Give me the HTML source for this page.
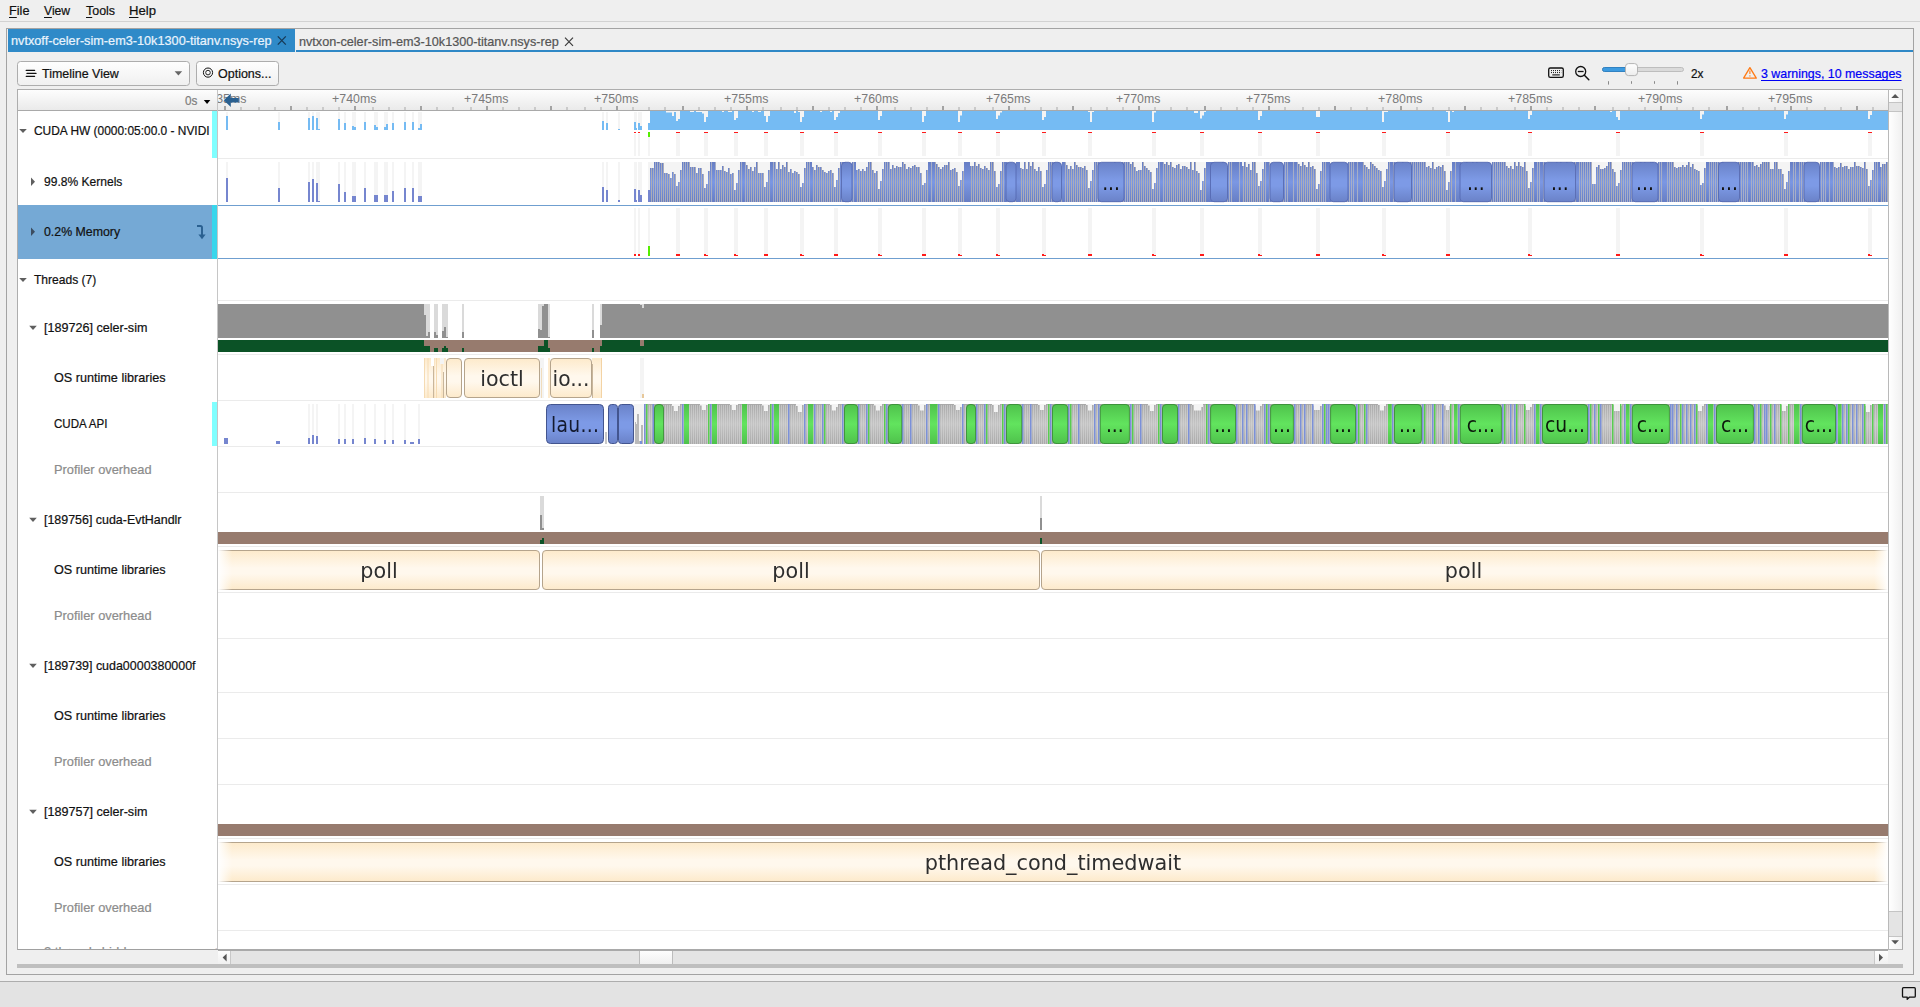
<!DOCTYPE html>
<html lang="en">
<head>
<meta charset="utf-8">
<title>NVIDIA Nsight Systems</title>
<style>
html,body{margin:0;padding:0}
body{width:1920px;height:1007px;overflow:hidden;background:#efefef;position:relative;
  font-family:"Liberation Sans",sans-serif;font-size:13px;color:#111;line-height:16px}
*{box-sizing:border-box}
.abs{position:absolute;white-space:pre}
#menubar{position:absolute;left:0;top:0;width:1920px;height:22px;border-bottom:1px solid #d2d2d2;background:#efefef}
#menubar u{text-decoration:underline;text-underline-offset:1.5px;text-decoration-thickness:1px}
#frame{position:absolute;left:6px;top:28px;width:1908px;height:947px;border:1px solid #a3a3a3;background:#efefef}
#tab1{position:absolute;left:8px;top:29px;width:287px;height:23px;background:#2f8ac8;color:#eaf4fd}
#tab2{position:absolute;left:296px;top:29px;width:290px;height:21px;color:#555}
.tabtxt{position:absolute;white-space:pre}
#toolbar{position:absolute;left:7px;top:52px;width:1906px;height:37px}
#tabline{position:absolute;left:296px;top:50px;width:1617px;height:2px;background:#2f88c6}
.btn{position:absolute;top:9px;height:25px;border:1px solid #adadad;border-radius:3.5px;
  background:linear-gradient(#fefefe,#f0f0f0)}
#tree{position:absolute;left:17px;top:89px;width:201px;height:861px;background:#fff;border-left:1px solid #adadad;border-top:1px solid #adadad;border-bottom:1px solid #a0a0a0;overflow:hidden}
#tl{position:absolute;left:218px;top:89px;width:1670px;height:862px;background:#fff;border-top:1px solid #adadad;border-bottom:2px solid #a9a9a9}
#divider{position:absolute;left:217px;top:90px;width:1px;height:859px;background:#c6c6c6}
.hdr{position:absolute;top:90px;height:20px;background:linear-gradient(#fdfdfd,#eaeaea)}
.hdrline{position:absolute;top:110px;height:1px;background:#a9a9a9}
.t{position:absolute;white-space:pre;height:16px;line-height:16px;letter-spacing:0;transform-origin:0 0;-webkit-text-stroke:0.22px currentColor}
.t u{text-decoration-skip-ink:none;text-decoration:underline;text-underline-offset:1.5px;text-decoration-thickness:1px}
.g{color:#8c8c8c}
.row{position:absolute;left:0;width:199px}
.row.sel{background:#75a9d5}
.cy{position:absolute;left:194px;width:5px;background:#80ffff}
#vsb{position:absolute;left:1888px;top:89px;width:15px;height:861px;border-left:1px solid #b9b9b9;border-right:1px solid #aaa;border-top:1px solid #adadad;border-bottom:1px solid #b4b4b4;background:#e4e4e4}
#vsb i{position:absolute;left:0;width:13px;display:block}
#hsb{position:absolute;left:218px;top:951px;width:1670px;height:13px;background:#e4e4e4}
#hsb i{position:absolute;top:0;height:13px;display:block}
#split{position:absolute;left:17px;top:964px;width:1886px;height:4px;background:#bfbfbf}
#status{position:absolute;left:0;top:981px;width:1920px;height:26px;background:#e3e3e3;border-top:1px solid #adadad}
svg{position:absolute;left:0;top:0;overflow:hidden}
.tl{font-family:"DejaVu Sans",sans-serif;font-size:20.8px;letter-spacing:0}
.tc{font-family:"DejaVu Sans Condensed","DejaVu Sans",sans-serif;font-stretch:condensed;font-size:20.8px;letter-spacing:0}
.rl{font-family:"Liberation Sans",sans-serif;font-size:13px;fill:#7a7a7a}
a{color:#0000f5;text-decoration:underline;text-underline-offset:2.2px;text-decoration-thickness:1px;text-decoration-skip-ink:none}
</style>
</head>
<body>
<div id="menubar">
<div class="t" style="left:9.02px;top:3.00px;color:#111;transform:scaleX(0.9788)"><u>F</u>ile</div>
<div class="t" style="left:44.30px;top:3.00px;color:#111;transform:scaleX(0.9351)"><u>V</u>iew</div>
<div class="t" style="left:86.00px;top:3.00px;color:#111;transform:scaleX(0.9563)"><u>T</u>ools</div>
<div class="t" style="left:129.29px;top:3.00px;color:#111;transform:scaleX(1.0076)"><u>H</u>elp</div>
</div>
<div id="frame"></div>
<div id="tab1"><div class="t" style="left:3.20px;top:3.50px;color:#eaf4fd;transform:scaleX(0.9763)">nvtxoff-celer-sim-em3-10k1300-titanv.nsys-rep</div></div>
<div id="tab2"><div class="t" style="left:2.60px;top:5.00px;color:#555;transform:scaleX(0.9725)">nvtxon-celer-sim-em3-10k1300-titanv.nsys-rep</div></div>
<div id="tabline"></div>
<div id="toolbar">
<div class="btn" style="left:10px;width:173px"><div class="t" style="left:24.00px;top:4.00px;color:#111;transform:scaleX(0.9578)">Timeline View</div></div>
<div class="btn" style="left:189px;width:83px"><div class="t" style="left:21.40px;top:4.00px;color:#111;transform:scaleX(0.9614)">Options...</div></div>
<div class="t" style="left:1684.10px;top:13.80px;color:#111;transform:scaleX(0.9065)">2x</div>
<div class="t" style="left:1754.30px;top:14.00px;color:#0000f5;transform:scaleX(0.9533)"><a>3 warnings, 10 messages</a></div>
</div>
<div id="tl"></div>
<div class="hdr" style="left:218px;width:1670px"></div>
<div id="tree">
<div class="hdr" style="left:0;top:0;width:199px"><div class="t" style="left:167.00px;top:2.70px;color:#7d7d7d;transform:scaleX(0.8995)">0s</div></div>
<div class="row" style="top:21px;height:47px"><div class="t" style="left:16.30px;top:11.50px;color:#111;transform:scaleX(0.9172)">CUDA HW (0000:05:00.0 - NVIDI</div><i class="cy" style="top:0px;height:47px;background:#80ffff"></i></div>
<div class="row" style="top:69px;height:46px"><div class="t" style="left:26.20px;top:14.50px;color:#111;transform:scaleX(0.9265)">99.8% Kernels</div></div>
<div class="row sel" style="top:115px;height:54px"><div class="t" style="left:26.20px;top:18.50px;color:#111;transform:scaleX(0.9493)">0.2% Memory</div><i class="cy" style="top:0px;height:54px;background:#39d6ec"></i></div>
<div class="row" style="top:169px;height:41px"><div class="t" style="left:16.30px;top:12.50px;color:#111;transform:scaleX(0.9273)">Threads (7)</div></div>
<div class="row" style="top:211px;height:53px"><div class="t" style="left:26.20px;top:18.50px;color:#111;transform:scaleX(0.9669)">[189726] celer-sim</div></div>
<div class="row" style="top:265px;height:45px"><div class="t" style="left:36.20px;top:14.50px;color:#111;transform:scaleX(0.9717)">OS runtime libraries</div></div>
<div class="row" style="top:311px;height:45px"><div class="t" style="left:36.20px;top:14.50px;color:#111;transform:scaleX(0.8900)">CUDA API</div><i class="cy" style="top:1px;height:44px;background:#80ffff"></i></div>
<div class="row" style="top:357px;height:45px"><div class="t" style="left:35.61px;top:14.50px;color:#8c8c8c;transform:scaleX(0.9860)">Profiler overhead</div></div>
<div class="row" style="top:403px;height:53px"><div class="t" style="left:26.20px;top:18.50px;color:#111;transform:scaleX(0.9558)">[189756] cuda-EvtHandlr</div></div>
<div class="row" style="top:457px;height:45px"><div class="t" style="left:36.20px;top:14.50px;color:#111;transform:scaleX(0.9717)">OS runtime libraries</div></div>
<div class="row" style="top:503px;height:45px"><div class="t" style="left:35.61px;top:14.50px;color:#8c8c8c;transform:scaleX(0.9860)">Profiler overhead</div></div>
<div class="row" style="top:549px;height:53px"><div class="t" style="left:26.20px;top:18.50px;color:#111;transform:scaleX(0.9571)">[189739] cuda0000380000f</div></div>
<div class="row" style="top:603px;height:45px"><div class="t" style="left:36.20px;top:14.50px;color:#111;transform:scaleX(0.9717)">OS runtime libraries</div></div>
<div class="row" style="top:649px;height:45px"><div class="t" style="left:35.61px;top:14.50px;color:#8c8c8c;transform:scaleX(0.9860)">Profiler overhead</div></div>
<div class="row" style="top:695px;height:53px"><div class="t" style="left:26.20px;top:18.50px;color:#111;transform:scaleX(0.9669)">[189757] celer-sim</div></div>
<div class="row" style="top:749px;height:45px"><div class="t" style="left:36.20px;top:14.50px;color:#111;transform:scaleX(0.9717)">OS runtime libraries</div></div>
<div class="row" style="top:795px;height:45px"><div class="t" style="left:35.61px;top:14.50px;color:#8c8c8c;transform:scaleX(0.9860)">Profiler overhead</div></div>
<div class="row" style="top:841px;height:19px"><div class="t" style="left:26px;top:12.5px;color:#8c8c8c">2 threads hidden...</div><div class="t" style="left:178px;top:12.5px;color:#8c8c8c">&#8212; +</div></div>
</div>
<div class="hdrline" style="left:18px;width:1870px"></div>
<div id="divider"></div>
<div id="vsb">
  <i style="top:0;height:13px;background:linear-gradient(90deg,#fff,#f2f2f2);border-bottom:1px solid #c4c4c4"></i>
  <i style="top:21px;height:801px;background:linear-gradient(90deg,#fff,#f0f0f0);border-top:1px solid #c4c4c4;border-bottom:1px solid #c4c4c4"></i>
  <i style="top:846px;height:13px;background:linear-gradient(90deg,#fff,#f2f2f2);border-top:1px solid #c4c4c4"></i>
</div>
<div id="hsb">
  <i style="left:0;width:13px;background:linear-gradient(#fdfdfd,#f0f0f0);border-right:1px solid #c8c8c8"></i>
  <i style="left:421px;width:34px;background:linear-gradient(#fdfdfd,#f0f0f0);border-left:1px solid #bcbcbc;border-right:1px solid #bcbcbc"></i>
  <i style="left:1656px;width:14px;background:linear-gradient(#fdfdfd,#f0f0f0);border-left:1px solid #c8c8c8"></i>
</div>
<div id="split"></div>
<div id="status"></div>

<svg width="1920" height="1007" viewBox="0 0 1920 1007">
<defs>
  <linearGradient id="gk" x1="0" y1="162" x2="0" y2="202" gradientUnits="userSpaceOnUse">
    <stop offset="0" stop-color="#677ec4"/><stop offset="0.5" stop-color="#7b97e3"/><stop offset="1" stop-color="#677ec4"/>
  </linearGradient>
  <linearGradient id="gkb" x1="0" y1="0" x2="0" y2="1">
    <stop offset="0" stop-color="#6a82c8"/><stop offset="0.45" stop-color="#7d9ae6"/><stop offset="0.6" stop-color="#7d9ae6"/><stop offset="1" stop-color="#6a82c8"/>
  </linearGradient>
  <linearGradient id="gp" x1="0" y1="0" x2="0" y2="1">
    <stop offset="0" stop-color="#fdeacb"/><stop offset="0.45" stop-color="#fff8ed"/><stop offset="0.6" stop-color="#fff8ed"/><stop offset="1" stop-color="#fdeacb"/>
  </linearGradient>
  <linearGradient id="gg" x1="0" y1="404" x2="0" y2="444" gradientUnits="userSpaceOnUse">
    <stop offset="0" stop-color="#a9a9a9"/><stop offset="0.5" stop-color="#c4c4c4"/><stop offset="1" stop-color="#a9a9a9"/>
  </linearGradient>
  <linearGradient id="ggr" x1="0" y1="0" x2="0" y2="1">
    <stop offset="0" stop-color="#4fc24c"/><stop offset="0.5" stop-color="#62e45e"/><stop offset="1" stop-color="#4fc24c"/>
  </linearGradient>
  <linearGradient id="fl" x1="0" y1="0" x2="1" y2="0">
    <stop offset="0" stop-color="#fff" stop-opacity="1"/><stop offset="1" stop-color="#fff" stop-opacity="0"/>
  </linearGradient>
  <linearGradient id="fr" x1="0" y1="0" x2="1" y2="0">
    <stop offset="0" stop-color="#fff" stop-opacity="0"/><stop offset="1" stop-color="#fff" stop-opacity="1"/>
  </linearGradient>
  <linearGradient id="gh" x1="0" y1="0" x2="0" y2="1">
    <stop offset="0" stop-color="#ffffff"/><stop offset="1" stop-color="#ededed"/>
  </linearGradient>
  <clipPath id="cliptl"><rect x="218" y="90" width="1670" height="859"/></clipPath>
</defs>
<g clip-path="url(#cliptl)">
<path d="M240,107h2v3h-2zM258,107h2v3h-2zM274,107h2v3h-2zM306,107h2v3h-2zM322,107h2v3h-2zM338,107h2v3h-2zM372,107h2v3h-2zM388,107h2v3h-2zM404,107h2v3h-2zM436,107h2v3h-2zM452,107h2v3h-2zM470,107h2v3h-2zM502,107h2v3h-2zM518,107h2v3h-2zM534,107h2v3h-2zM566,107h2v3h-2zM584,107h2v3h-2zM600,107h2v3h-2zM632,107h2v3h-2zM648,107h2v3h-2zM664,107h2v3h-2zM698,107h2v3h-2zM714,107h2v3h-2zM730,107h2v3h-2zM762,107h2v3h-2zM780,107h2v3h-2zM796,107h2v3h-2zM828,107h2v3h-2zM844,107h2v3h-2zM860,107h2v3h-2zM894,107h2v3h-2zM910,107h2v3h-2zM926,107h2v3h-2zM958,107h2v3h-2zM974,107h2v3h-2zM992,107h2v3h-2zM1024,107h2v3h-2zM1040,107h2v3h-2zM1056,107h2v3h-2zM1090,107h2v3h-2zM1106,107h2v3h-2zM1122,107h2v3h-2zM1154,107h2v3h-2zM1170,107h2v3h-2zM1186,107h2v3h-2zM1220,107h2v3h-2zM1236,107h2v3h-2zM1252,107h2v3h-2zM1284,107h2v3h-2zM1302,107h2v3h-2zM1318,107h2v3h-2zM1350,107h2v3h-2zM1366,107h2v3h-2zM1382,107h2v3h-2zM1416,107h2v3h-2zM1432,107h2v3h-2zM1448,107h2v3h-2zM1480,107h2v3h-2zM1496,107h2v3h-2zM1514,107h2v3h-2zM1546,107h2v3h-2zM1562,107h2v3h-2zM1578,107h2v3h-2zM1612,107h2v3h-2zM1628,107h2v3h-2zM1644,107h2v3h-2zM1676,107h2v3h-2zM1692,107h2v3h-2zM1708,107h2v3h-2zM1742,107h2v3h-2zM1758,107h2v3h-2zM1774,107h2v3h-2zM1806,107h2v3h-2zM1824,107h2v3h-2zM1840,107h2v3h-2zM1872,107h2v3h-2z" fill="#cacaca"/>
<path d="M224,106h2v4h-2zM290,106h2v4h-2zM354,106h2v4h-2zM420,106h2v4h-2zM486,106h2v4h-2zM550,106h2v4h-2zM616,106h2v4h-2zM682,106h2v4h-2zM746,106h2v4h-2zM812,106h2v4h-2zM876,106h2v4h-2zM942,106h2v4h-2zM1008,106h2v4h-2zM1072,106h2v4h-2zM1138,106h2v4h-2zM1204,106h2v4h-2zM1268,106h2v4h-2zM1334,106h2v4h-2zM1400,106h2v4h-2zM1464,106h2v4h-2zM1530,106h2v4h-2zM1594,106h2v4h-2zM1660,106h2v4h-2zM1726,106h2v4h-2zM1790,106h2v4h-2zM1856,106h2v4h-2z" fill="#a3a3a3"/>
<text x="224.25" y="102.5" class="rl" text-anchor="middle" textLength="44.3" lengthAdjust="spacingAndGlyphs">+735ms</text>
<text x="354.25" y="102.5" class="rl" text-anchor="middle" textLength="44.3" lengthAdjust="spacingAndGlyphs">+740ms</text>
<text x="486.25" y="102.5" class="rl" text-anchor="middle" textLength="44.3" lengthAdjust="spacingAndGlyphs">+745ms</text>
<text x="616.25" y="102.5" class="rl" text-anchor="middle" textLength="44.3" lengthAdjust="spacingAndGlyphs">+750ms</text>
<text x="746.25" y="102.5" class="rl" text-anchor="middle" textLength="44.3" lengthAdjust="spacingAndGlyphs">+755ms</text>
<text x="876.25" y="102.5" class="rl" text-anchor="middle" textLength="44.3" lengthAdjust="spacingAndGlyphs">+760ms</text>
<text x="1008.25" y="102.5" class="rl" text-anchor="middle" textLength="44.3" lengthAdjust="spacingAndGlyphs">+765ms</text>
<text x="1138.25" y="102.5" class="rl" text-anchor="middle" textLength="44.3" lengthAdjust="spacingAndGlyphs">+770ms</text>
<text x="1268.25" y="102.5" class="rl" text-anchor="middle" textLength="44.3" lengthAdjust="spacingAndGlyphs">+775ms</text>
<text x="1400.25" y="102.5" class="rl" text-anchor="middle" textLength="44.3" lengthAdjust="spacingAndGlyphs">+780ms</text>
<text x="1530.25" y="102.5" class="rl" text-anchor="middle" textLength="44.3" lengthAdjust="spacingAndGlyphs">+785ms</text>
<text x="1660.25" y="102.5" class="rl" text-anchor="middle" textLength="44.3" lengthAdjust="spacingAndGlyphs">+790ms</text>
<text x="1790.25" y="102.5" class="rl" text-anchor="middle" textLength="44.3" lengthAdjust="spacingAndGlyphs">+795ms</text>
<rect x="218" y="158" width="1670" height="1" fill="#ebebeb"/>
<rect x="218" y="300" width="1670" height="1" fill="#ebebeb"/>
<rect x="218" y="354" width="1670" height="1" fill="#ebebeb"/>
<rect x="218" y="400" width="1670" height="1" fill="#ebebeb"/>
<rect x="218" y="446" width="1670" height="1" fill="#ebebeb"/>
<rect x="218" y="492" width="1670" height="1" fill="#ebebeb"/>
<rect x="218" y="546" width="1670" height="1" fill="#ebebeb"/>
<rect x="218" y="592" width="1670" height="1" fill="#ebebeb"/>
<rect x="218" y="638" width="1670" height="1" fill="#ebebeb"/>
<rect x="218" y="692" width="1670" height="1" fill="#ebebeb"/>
<rect x="218" y="738" width="1670" height="1" fill="#ebebeb"/>
<rect x="218" y="784" width="1670" height="1" fill="#ebebeb"/>
<rect x="218" y="838" width="1670" height="1" fill="#ebebeb"/>
<rect x="218" y="884" width="1670" height="1" fill="#ebebeb"/>
<rect x="218" y="930" width="1670" height="1" fill="#ebebeb"/>
<rect x="218" y="205" width="1670" height="1" fill="#6f9fd0"/>
<rect x="218" y="258" width="1670" height="1" fill="#6f9fd0"/>
<g id="hw">
<rect x="226" y="112" width="2" height="4" fill="#f4f4f4"/>
<rect x="278" y="112" width="2" height="10" fill="#f4f4f4"/>
<rect x="308" y="112" width="2" height="6" fill="#f4f4f4"/>
<rect x="312" y="112" width="2" height="4" fill="#f4f4f4"/>
<rect x="316" y="112" width="2" height="6" fill="#f4f4f4"/>
<rect x="318" y="112" width="2" height="17" fill="#f4f4f4"/>
<rect x="338" y="112" width="2" height="7" fill="#f4f4f4"/>
<rect x="344" y="112" width="2" height="11" fill="#f4f4f4"/>
<rect x="352" y="112" width="2" height="14" fill="#f4f4f4"/>
<rect x="354" y="112" width="2" height="15" fill="#f4f4f4"/>
<rect x="364" y="112" width="2" height="10" fill="#f4f4f4"/>
<rect x="374" y="112" width="2" height="13" fill="#f4f4f4"/>
<rect x="376" y="112" width="2" height="15" fill="#f4f4f4"/>
<rect x="384" y="112" width="2" height="15" fill="#f4f4f4"/>
<rect x="386" y="112" width="2" height="12" fill="#f4f4f4"/>
<rect x="392" y="112" width="2" height="11" fill="#f4f4f4"/>
<rect x="404" y="112" width="2" height="10" fill="#f4f4f4"/>
<rect x="412" y="112" width="2" height="10" fill="#f4f4f4"/>
<rect x="418" y="112" width="2" height="16" fill="#f4f4f4"/>
<rect x="420" y="112" width="2" height="12" fill="#f4f4f4"/>
<rect x="602" y="112" width="2" height="9" fill="#f4f4f4"/>
<rect x="606" y="112" width="2" height="11" fill="#f4f4f4"/>
<rect x="618" y="112" width="2" height="17" fill="#f4f4f4"/>
<rect x="634" y="112" width="2" height="10" fill="#f4f4f4"/>
<rect x="636" y="112" width="1" height="16" fill="#f4f4f4"/>
<rect x="638" y="112" width="2" height="11" fill="#f4f4f4"/>
<rect x="640" y="112" width="2" height="14" fill="#f4f4f4"/>
<rect x="226" y="116" width="2" height="14" fill="#75bbf3"/>
<rect x="278" y="122" width="2" height="8" fill="#75bbf3"/>
<rect x="308" y="118" width="2" height="12" fill="#75bbf3"/>
<rect x="312" y="116" width="2" height="14" fill="#75bbf3"/>
<rect x="316" y="118" width="2" height="12" fill="#75bbf3"/>
<rect x="318" y="129" width="2" height="1" fill="#75bbf3"/>
<rect x="338" y="119" width="2" height="11" fill="#75bbf3"/>
<rect x="344" y="123" width="2" height="7" fill="#75bbf3"/>
<rect x="352" y="126" width="2" height="4" fill="#75bbf3"/>
<rect x="354" y="127" width="2" height="3" fill="#75bbf3"/>
<rect x="364" y="122" width="2" height="8" fill="#75bbf3"/>
<rect x="374" y="125" width="2" height="5" fill="#75bbf3"/>
<rect x="376" y="127" width="2" height="3" fill="#75bbf3"/>
<rect x="384" y="127" width="2" height="3" fill="#75bbf3"/>
<rect x="386" y="124" width="2" height="6" fill="#75bbf3"/>
<rect x="392" y="123" width="2" height="7" fill="#75bbf3"/>
<rect x="404" y="122" width="2" height="8" fill="#75bbf3"/>
<rect x="412" y="122" width="2" height="8" fill="#75bbf3"/>
<rect x="418" y="128" width="2" height="2" fill="#75bbf3"/>
<rect x="420" y="124" width="2" height="6" fill="#75bbf3"/>
<rect x="602" y="121" width="2" height="9" fill="#75bbf3"/>
<rect x="606" y="123" width="2" height="7" fill="#75bbf3"/>
<rect x="618" y="129" width="2" height="1" fill="#75bbf3"/>
<rect x="634" y="122" width="2" height="8" fill="#75bbf3"/>
<rect x="636" y="128" width="1" height="2" fill="#75bbf3"/>
<rect x="638" y="123" width="2" height="7" fill="#75bbf3"/>
<rect x="640" y="126" width="2" height="4" fill="#75bbf3"/>
<rect x="648" y="123" width="2" height="7" fill="#75bbf3"/>
<rect x="650" y="111" width="1238" height="19" fill="#75bbf3"/>
<rect x="666" y="111" width="6" height="1.5" fill="#f4f4f4"/>
<rect x="672" y="111" width="2" height="5" fill="#f4f4f4"/>
<rect x="674" y="111" width="2" height="1" fill="#f4f4f4"/>
<rect x="676" y="111" width="2" height="10" fill="#f4f4f4"/>
<rect x="678" y="111" width="2" height="8" fill="#f4f4f4"/>
<rect x="690" y="111" width="4" height="1" fill="#f4f4f4"/>
<rect x="696" y="111" width="6" height="1" fill="#f4f4f4"/>
<rect x="702" y="111" width="2" height="2.5" fill="#f4f4f4"/>
<rect x="704" y="111" width="2" height="11" fill="#f4f4f4"/>
<rect x="706" y="111" width="2" height="6" fill="#f4f4f4"/>
<rect x="722" y="111" width="2" height="1" fill="#f4f4f4"/>
<rect x="728" y="111" width="4" height="1" fill="#f4f4f4"/>
<rect x="734" y="111" width="2" height="9" fill="#f4f4f4"/>
<rect x="736" y="111" width="2" height="7" fill="#f4f4f4"/>
<rect x="752" y="111" width="2" height="1" fill="#f4f4f4"/>
<rect x="758" y="111" width="3" height="1" fill="#f4f4f4"/>
<rect x="764" y="111" width="2" height="5" fill="#f4f4f4"/>
<rect x="766" y="111" width="2" height="11" fill="#f4f4f4"/>
<rect x="768" y="111" width="2" height="5" fill="#f4f4f4"/>
<rect x="794" y="111" width="2" height="2" fill="#f4f4f4"/>
<rect x="798" y="111" width="2" height="1" fill="#f4f4f4"/>
<rect x="800" y="111" width="2" height="11" fill="#f4f4f4"/>
<rect x="802" y="111" width="2" height="6" fill="#f4f4f4"/>
<rect x="820" y="111" width="2" height="1" fill="#f4f4f4"/>
<rect x="830" y="111" width="2" height="1" fill="#f4f4f4"/>
<rect x="834" y="111" width="2" height="9" fill="#f4f4f4"/>
<rect x="836" y="111" width="2" height="6" fill="#f4f4f4"/>
<rect x="838" y="111" width="2" height="2" fill="#f4f4f4"/>
<rect x="878" y="111" width="2" height="9" fill="#f4f4f4"/>
<rect x="880" y="111" width="2" height="5" fill="#f4f4f4"/>
<rect x="922" y="111" width="2" height="11" fill="#f4f4f4"/>
<rect x="924" y="111" width="2" height="5" fill="#f4f4f4"/>
<rect x="958" y="111" width="2" height="11" fill="#f4f4f4"/>
<rect x="960" y="111" width="2" height="4.5" fill="#f4f4f4"/>
<rect x="996" y="111" width="2" height="8" fill="#f4f4f4"/>
<rect x="998" y="111" width="2" height="4.5" fill="#f4f4f4"/>
<rect x="1000" y="111" width="2" height="1.5" fill="#f4f4f4"/>
<rect x="1042" y="111" width="2" height="9" fill="#f4f4f4"/>
<rect x="1044" y="111" width="2" height="6" fill="#f4f4f4"/>
<rect x="1088" y="111" width="6" height="1" fill="#f4f4f4"/>
<rect x="1090" y="111" width="2" height="11" fill="#f4f4f4"/>
<rect x="1152" y="111" width="2" height="11" fill="#f4f4f4"/>
<rect x="1154" y="111" width="2" height="1.5" fill="#f4f4f4"/>
<rect x="1194" y="111" width="4" height="2" fill="#f4f4f4"/>
<rect x="1200" y="111" width="2" height="7.5" fill="#f4f4f4"/>
<rect x="1202" y="111" width="2" height="4.5" fill="#f4f4f4"/>
<rect x="1204" y="111" width="2" height="1" fill="#f4f4f4"/>
<rect x="1258" y="111" width="2" height="9" fill="#f4f4f4"/>
<rect x="1260" y="111" width="2" height="5" fill="#f4f4f4"/>
<rect x="1316" y="111" width="4" height="6" fill="#f4f4f4"/>
<rect x="1382" y="111" width="2" height="11" fill="#f4f4f4"/>
<rect x="1384" y="111" width="4" height="1" fill="#f4f4f4"/>
<rect x="1446" y="111" width="2" height="1" fill="#f4f4f4"/>
<rect x="1448" y="111" width="2" height="11" fill="#f4f4f4"/>
<rect x="1452" y="111" width="2" height="1" fill="#f4f4f4"/>
<rect x="1528" y="111" width="2" height="8" fill="#f4f4f4"/>
<rect x="1530" y="111" width="2" height="4" fill="#f4f4f4"/>
<rect x="1610" y="111" width="2" height="1" fill="#f4f4f4"/>
<rect x="1616" y="111" width="2" height="6" fill="#f4f4f4"/>
<rect x="1618" y="111" width="2" height="9" fill="#f4f4f4"/>
<rect x="1700" y="111" width="2" height="8" fill="#f4f4f4"/>
<rect x="1702" y="111" width="2" height="3.5" fill="#f4f4f4"/>
<rect x="1784" y="111" width="2" height="8" fill="#f4f4f4"/>
<rect x="1786" y="111" width="2" height="3.5" fill="#f4f4f4"/>
<rect x="1868" y="111" width="2" height="8" fill="#f4f4f4"/>
<rect x="1870" y="111" width="2" height="4" fill="#f4f4f4"/>
<rect x="676" y="132" width="4" height="1" fill="#ff1a1a"/>
<rect x="676" y="133" width="4" height="23" fill="#f4f4f4"/>
<rect x="704" y="132" width="4" height="1" fill="#ff1a1a"/>
<rect x="704" y="133" width="4" height="23" fill="#f4f4f4"/>
<rect x="734" y="132" width="4" height="1" fill="#ff1a1a"/>
<rect x="734" y="133" width="4" height="23" fill="#f4f4f4"/>
<rect x="764" y="132" width="4" height="1" fill="#ff1a1a"/>
<rect x="764" y="133" width="4" height="23" fill="#f4f4f4"/>
<rect x="800" y="132" width="4" height="1" fill="#ff1a1a"/>
<rect x="800" y="133" width="4" height="23" fill="#f4f4f4"/>
<rect x="834" y="132" width="4" height="1" fill="#ff1a1a"/>
<rect x="834" y="133" width="4" height="23" fill="#f4f4f4"/>
<rect x="878" y="132" width="4" height="1" fill="#ff1a1a"/>
<rect x="878" y="133" width="4" height="23" fill="#f4f4f4"/>
<rect x="922" y="132" width="4" height="1" fill="#ff1a1a"/>
<rect x="922" y="133" width="4" height="23" fill="#f4f4f4"/>
<rect x="958" y="132" width="4" height="1" fill="#ff1a1a"/>
<rect x="958" y="133" width="4" height="23" fill="#f4f4f4"/>
<rect x="996" y="132" width="4" height="1" fill="#ff1a1a"/>
<rect x="996" y="133" width="4" height="23" fill="#f4f4f4"/>
<rect x="1042" y="132" width="4" height="1" fill="#ff1a1a"/>
<rect x="1042" y="133" width="4" height="23" fill="#f4f4f4"/>
<rect x="1088" y="132" width="4" height="1" fill="#ff1a1a"/>
<rect x="1088" y="133" width="4" height="23" fill="#f4f4f4"/>
<rect x="1152" y="132" width="4" height="1" fill="#ff1a1a"/>
<rect x="1152" y="133" width="4" height="23" fill="#f4f4f4"/>
<rect x="1200" y="132" width="4" height="1" fill="#ff1a1a"/>
<rect x="1200" y="133" width="4" height="23" fill="#f4f4f4"/>
<rect x="1258" y="132" width="4" height="1" fill="#ff1a1a"/>
<rect x="1258" y="133" width="4" height="23" fill="#f4f4f4"/>
<rect x="1316" y="132" width="4" height="1" fill="#ff1a1a"/>
<rect x="1316" y="133" width="4" height="23" fill="#f4f4f4"/>
<rect x="1382" y="132" width="4" height="1" fill="#ff1a1a"/>
<rect x="1382" y="133" width="4" height="23" fill="#f4f4f4"/>
<rect x="1446" y="132" width="4" height="1" fill="#ff1a1a"/>
<rect x="1446" y="133" width="4" height="23" fill="#f4f4f4"/>
<rect x="1528" y="132" width="4" height="1" fill="#ff1a1a"/>
<rect x="1528" y="133" width="4" height="23" fill="#f4f4f4"/>
<rect x="1616" y="132" width="4" height="1" fill="#ff1a1a"/>
<rect x="1616" y="133" width="4" height="23" fill="#f4f4f4"/>
<rect x="1700" y="132" width="4" height="1" fill="#ff1a1a"/>
<rect x="1700" y="133" width="4" height="23" fill="#f4f4f4"/>
<rect x="1784" y="132" width="4" height="1" fill="#ff1a1a"/>
<rect x="1784" y="133" width="4" height="23" fill="#f4f4f4"/>
<rect x="1868" y="132" width="4" height="1" fill="#ff1a1a"/>
<rect x="1868" y="133" width="4" height="23" fill="#f4f4f4"/>
<rect x="634" y="132" width="2" height="1" fill="#ff1a1a"/>
<rect x="634" y="134" width="2" height="22" fill="#f4f4f4"/>
<rect x="638" y="132" width="2" height="1" fill="#ff1a1a"/>
<rect x="638" y="134" width="2" height="22" fill="#f4f4f4"/>
<rect x="648" y="132" width="2" height="5" fill="#55ee00"/>
<rect x="648" y="137" width="2" height="19" fill="#f4f4f4"/>
</g>
<g id="kernels">
<rect x="226" y="162" width="2" height="16" fill="#f4f4f4"/>
<rect x="278" y="162" width="2" height="26" fill="#f4f4f4"/>
<rect x="308" y="162" width="2" height="20" fill="#f4f4f4"/>
<rect x="312" y="162" width="2" height="17" fill="#f4f4f4"/>
<rect x="316" y="162" width="2" height="21" fill="#f4f4f4"/>
<rect x="318" y="162" width="2" height="39" fill="#f4f4f4"/>
<rect x="338" y="162" width="2" height="22" fill="#f4f4f4"/>
<rect x="344" y="162" width="2" height="30" fill="#f4f4f4"/>
<rect x="352" y="162" width="2" height="34" fill="#f4f4f4"/>
<rect x="354" y="162" width="2" height="34" fill="#f4f4f4"/>
<rect x="364" y="162" width="2" height="26" fill="#f4f4f4"/>
<rect x="374" y="162" width="2" height="33" fill="#f4f4f4"/>
<rect x="376" y="162" width="2" height="33" fill="#f4f4f4"/>
<rect x="384" y="162" width="2" height="33" fill="#f4f4f4"/>
<rect x="386" y="162" width="2" height="33" fill="#f4f4f4"/>
<rect x="392" y="162" width="2" height="29" fill="#f4f4f4"/>
<rect x="404" y="162" width="2" height="26" fill="#f4f4f4"/>
<rect x="412" y="162" width="2" height="26" fill="#f4f4f4"/>
<rect x="418" y="162" width="2" height="34" fill="#f4f4f4"/>
<rect x="420" y="162" width="2" height="34" fill="#f4f4f4"/>
<rect x="602" y="162" width="2" height="25" fill="#f4f4f4"/>
<rect x="606" y="162" width="2" height="28" fill="#f4f4f4"/>
<rect x="618" y="162" width="2" height="38" fill="#f4f4f4"/>
<rect x="634" y="162" width="2" height="27" fill="#f4f4f4"/>
<rect x="636" y="162" width="1" height="38" fill="#f4f4f4"/>
<rect x="638" y="162" width="2" height="28" fill="#f4f4f4"/>
<rect x="640" y="162" width="2" height="33" fill="#f4f4f4"/>
<rect x="226" y="178" width="2" height="24" fill="#7686cf"/>
<rect x="278" y="188" width="2" height="14" fill="#7686cf"/>
<rect x="308" y="182" width="2" height="20" fill="#7686cf"/>
<rect x="312" y="179" width="2" height="23" fill="#7686cf"/>
<rect x="316" y="183" width="2" height="19" fill="#7686cf"/>
<rect x="318" y="201" width="2" height="1" fill="#7686cf"/>
<rect x="338" y="184" width="2" height="18" fill="#7686cf"/>
<rect x="344" y="192" width="2" height="10" fill="#7686cf"/>
<rect x="352" y="196" width="2" height="6" fill="#7686cf"/>
<rect x="354" y="196" width="2" height="6" fill="#7686cf"/>
<rect x="364" y="188" width="2" height="14" fill="#7686cf"/>
<rect x="374" y="195" width="2" height="7" fill="#7686cf"/>
<rect x="376" y="195" width="2" height="7" fill="#7686cf"/>
<rect x="384" y="195" width="2" height="7" fill="#7686cf"/>
<rect x="386" y="195" width="2" height="7" fill="#7686cf"/>
<rect x="392" y="191" width="2" height="11" fill="#7686cf"/>
<rect x="404" y="188" width="2" height="14" fill="#7686cf"/>
<rect x="412" y="188" width="2" height="14" fill="#7686cf"/>
<rect x="418" y="196" width="2" height="6" fill="#7686cf"/>
<rect x="420" y="196" width="2" height="6" fill="#7686cf"/>
<rect x="602" y="187" width="2" height="15" fill="#7686cf"/>
<rect x="606" y="190" width="2" height="12" fill="#7686cf"/>
<rect x="618" y="200" width="2" height="2" fill="#7686cf"/>
<rect x="634" y="189" width="2" height="13" fill="#7686cf"/>
<rect x="636" y="200" width="1" height="2" fill="#7686cf"/>
<rect x="638" y="190" width="2" height="12" fill="#7686cf"/>
<rect x="640" y="195" width="2" height="7" fill="#7686cf"/>
<rect x="648" y="162" width="1240" height="40" fill="#f4f4f4"/>
<rect x="648" y="190" width="2" height="12" fill="#7686cf"/>
<path d="M650,202L650,168L652,168L652,168L654,168L654,162L656,162L656,162L658,162L658,162L660,162L660,163L662,163L662,163L664,163L664,173L666,173L666,173L668,173L668,174L670,174L670,178L672,178L672,172L674,172L674,174L676,174L676,186L678,186L678,182L680,182L680,170L682,170L682,162L684,162L684,162L686,162L686,162L688,162L688,162L690,162L690,167L692,167L692,167L694,167L694,167L696,167L696,173L698,173L698,168L700,168L700,168L702,168L702,174L704,174L704,188L706,188L706,184L708,184L708,171L710,171L710,162L712,162L712,162L714,162L714,162L716,162L716,170L718,170L718,170L720,170L720,170L722,170L722,166L724,166L724,171L726,171L726,172L728,172L728,168L730,168L730,174L732,174L732,173L734,173L734,190L736,190L736,183L738,183L738,170L740,170L740,162L742,162L742,162L744,162L744,162L746,162L746,165L748,165L748,169L750,169L750,167L752,167L752,171L754,171L754,167L756,167L756,162L758,162L758,173L760,173L760,173L762,173L762,173L764,173L764,187L766,187L766,182L768,182L768,170L770,170L770,162L772,162L772,162L774,162L774,162L776,162L776,169L778,169L778,162L780,162L780,169L782,169L782,165L784,165L784,167L786,167L786,162L788,162L788,172L790,172L790,169L792,169L792,173L794,173L794,171L796,171L796,172L798,172L798,174L800,174L800,187L802,187L802,183L804,183L804,168L806,168L806,162L808,162L808,162L810,162L810,162L812,162L812,167L814,167L814,170L816,170L816,165L818,165L818,167L820,167L820,167L822,167L822,170L824,170L824,172L826,172L826,173L828,173L828,171L830,171L830,170L832,170L832,173L834,173L834,187L836,187L836,180L838,180L838,168L840,168L840,162L842,162L842,162L844,162L844,162L846,162L846,164L848,164L848,166L850,166L850,169L852,169L852,162L854,162L854,162L856,162L856,170L858,170L858,169L860,169L860,171L862,171L862,169L864,169L864,171L866,171L866,167L868,167L868,162L870,162L870,162L872,162L872,170L874,170L874,173L876,173L876,171L878,171L878,189L880,189L880,181L882,181L882,169L884,169L884,162L886,162L886,162L888,162L888,162L890,162L890,169L892,169L892,165L894,165L894,168L896,168L896,166L898,166L898,167L900,167L900,167L902,167L902,162L904,162L904,164L906,164L906,169L908,169L908,167L910,167L910,168L912,168L912,166L914,166L914,165L916,165L916,167L918,167L918,167L920,167L920,173L922,173L922,185L924,185L924,183L926,183L926,170L928,170L928,162L930,162L930,162L932,162L932,162L934,162L934,162L936,162L936,164L938,164L938,167L940,167L940,169L942,169L942,167L944,167L944,165L946,165L946,165L948,165L948,162L950,162L950,170L952,170L952,169L954,169L954,168L956,168L956,172L958,172L958,186L960,186L960,180L962,180L962,171L964,171L964,162L966,162L966,162L968,162L968,162L970,162L970,166L972,166L972,166L974,166L974,162L976,162L976,166L978,166L978,164L980,164L980,168L982,168L982,169L984,169L984,166L986,166L986,168L988,168L988,170L990,170L990,162L992,162L992,162L994,162L994,171L996,171L996,187L998,187L998,184L1000,184L1000,171L1002,171L1002,162L1004,162L1004,162L1006,162L1006,162L1008,162L1008,167L1010,167L1010,165L1012,165L1012,164L1014,164L1014,164L1016,164L1016,162L1018,162L1018,162L1020,162L1020,168L1022,168L1022,169L1024,169L1024,162L1026,162L1026,169L1028,169L1028,162L1030,162L1030,166L1032,166L1032,162L1034,162L1034,169L1036,169L1036,171L1038,171L1038,167L1040,167L1040,171L1042,171L1042,187L1044,187L1044,184L1046,184L1046,170L1048,170L1048,162L1050,162L1050,162L1052,162L1052,162L1054,162L1054,162L1056,162L1056,168L1058,168L1058,166L1060,166L1060,167L1062,167L1062,162L1064,162L1064,162L1066,162L1066,165L1068,165L1068,169L1070,169L1070,166L1072,166L1072,169L1074,169L1074,162L1076,162L1076,165L1078,165L1078,167L1080,167L1080,167L1082,167L1082,168L1084,168L1084,166L1086,166L1086,170L1088,170L1088,188L1090,188L1090,181L1092,181L1092,170L1094,170L1094,162L1096,162L1096,162L1098,162L1098,162L1100,162L1100,164L1102,164L1102,167L1104,167L1104,164L1106,164L1106,165L1108,165L1108,166L1110,166L1110,163L1112,163L1112,165L1114,165L1114,162L1116,162L1116,166L1118,166L1118,168L1120,168L1120,169L1122,169L1122,162L1124,162L1124,162L1126,162L1126,162L1128,162L1128,162L1130,162L1130,164L1132,164L1132,162L1134,162L1134,167L1136,167L1136,171L1138,171L1138,170L1140,170L1140,170L1142,170L1142,162L1144,162L1144,166L1146,166L1146,168L1148,168L1148,170L1150,170L1150,172L1152,172L1152,189L1154,189L1154,183L1156,183L1156,168L1158,168L1158,162L1160,162L1160,162L1162,162L1162,162L1164,162L1164,164L1166,164L1166,162L1168,162L1168,165L1170,165L1170,162L1172,162L1172,167L1174,167L1174,168L1176,168L1176,165L1178,165L1178,164L1180,164L1180,169L1182,169L1182,166L1184,166L1184,166L1186,166L1186,167L1188,167L1188,169L1190,169L1190,162L1192,162L1192,170L1194,170L1194,162L1196,162L1196,171L1198,171L1198,173L1200,173L1200,190L1202,190L1202,181L1204,181L1204,168L1206,168L1206,162L1208,162L1208,162L1210,162L1210,162L1212,162L1212,162L1214,162L1214,167L1216,167L1216,164L1218,164L1218,168L1220,168L1220,168L1222,168L1222,162L1224,162L1224,166L1226,166L1226,168L1228,168L1228,162L1230,162L1230,162L1232,162L1232,162L1234,162L1234,162L1236,162L1236,162L1238,162L1238,162L1240,162L1240,162L1242,162L1242,166L1244,166L1244,162L1246,162L1246,167L1248,167L1248,164L1250,164L1250,170L1252,170L1252,162L1254,162L1254,162L1256,162L1256,173L1258,173L1258,186L1260,186L1260,181L1262,181L1262,169L1264,169L1264,162L1266,162L1266,162L1268,162L1268,162L1270,162L1270,164L1272,164L1272,163L1274,163L1274,167L1276,167L1276,166L1278,166L1278,166L1280,166L1280,162L1282,162L1282,165L1284,165L1284,162L1286,162L1286,162L1288,162L1288,162L1290,162L1290,162L1292,162L1292,162L1294,162L1294,162L1296,162L1296,162L1298,162L1298,164L1300,164L1300,166L1302,166L1302,162L1304,162L1304,165L1306,165L1306,167L1308,167L1308,162L1310,162L1310,167L1312,167L1312,166L1314,166L1314,169L1316,169L1316,189L1318,189L1318,184L1320,184L1320,171L1322,171L1322,162L1324,162L1324,162L1326,162L1326,162L1328,162L1328,162L1330,162L1330,167L1332,167L1332,165L1334,165L1334,163L1336,163L1336,168L1338,168L1338,164L1340,164L1340,168L1342,168L1342,163L1344,163L1344,168L1346,168L1346,167L1348,167L1348,162L1350,162L1350,162L1352,162L1352,162L1354,162L1354,162L1356,162L1356,162L1358,162L1358,162L1360,162L1360,162L1362,162L1362,162L1364,162L1364,165L1366,165L1366,167L1368,167L1368,169L1370,169L1370,162L1372,162L1372,164L1374,164L1374,166L1376,166L1376,168L1378,168L1378,170L1380,170L1380,171L1382,171L1382,187L1384,187L1384,181L1386,181L1386,169L1388,169L1388,162L1390,162L1390,162L1392,162L1392,162L1394,162L1394,162L1396,162L1396,162L1398,162L1398,167L1400,167L1400,166L1402,166L1402,162L1404,162L1404,167L1406,167L1406,165L1408,165L1408,163L1410,163L1410,162L1412,162L1412,162L1414,162L1414,162L1416,162L1416,162L1418,162L1418,162L1420,162L1420,162L1422,162L1422,162L1424,162L1424,162L1426,162L1426,167L1428,167L1428,166L1430,166L1430,168L1432,168L1432,162L1434,162L1434,169L1436,169L1436,167L1438,167L1438,166L1440,166L1440,167L1442,167L1442,165L1444,165L1444,171L1446,171L1446,190L1448,190L1448,182L1450,182L1450,171L1452,171L1452,162L1454,162L1454,162L1456,162L1456,162L1458,162L1458,162L1460,162L1460,162L1462,162L1462,163L1464,163L1464,167L1466,167L1466,162L1468,162L1468,167L1470,167L1470,168L1472,168L1472,162L1474,162L1474,163L1476,163L1476,162L1478,162L1478,163L1480,163L1480,163L1482,163L1482,167L1484,167L1484,163L1486,163L1486,167L1488,167L1488,164L1490,164L1490,165L1492,165L1492,162L1494,162L1494,162L1496,162L1496,162L1498,162L1498,162L1500,162L1500,162L1502,162L1502,162L1504,162L1504,162L1506,162L1506,166L1508,166L1508,168L1510,168L1510,166L1512,166L1512,169L1514,169L1514,162L1516,162L1516,166L1518,166L1518,162L1520,162L1520,166L1522,166L1522,167L1524,167L1524,162L1526,162L1526,171L1528,171L1528,188L1530,188L1530,182L1532,182L1532,168L1534,168L1534,162L1536,162L1536,162L1538,162L1538,162L1540,162L1540,162L1542,162L1542,162L1544,162L1544,162L1546,162L1546,163L1548,163L1548,168L1550,168L1550,165L1552,165L1552,168L1554,168L1554,165L1556,165L1556,162L1558,162L1558,166L1560,166L1560,162L1562,162L1562,164L1564,164L1564,168L1566,168L1566,162L1568,162L1568,166L1570,166L1570,168L1572,168L1572,163L1574,163L1574,162L1576,162L1576,162L1578,162L1578,162L1580,162L1580,162L1582,162L1582,162L1584,162L1584,162L1586,162L1586,162L1588,162L1588,162L1590,162L1590,162L1592,162L1592,184L1594,184L1594,184L1596,184L1596,167L1598,167L1598,165L1600,165L1600,169L1602,169L1602,169L1604,169L1604,168L1606,168L1606,166L1608,166L1608,162L1610,162L1610,162L1612,162L1612,169L1614,169L1614,172L1616,172L1616,186L1618,186L1618,183L1620,183L1620,170L1622,170L1622,162L1624,162L1624,162L1626,162L1626,162L1628,162L1628,162L1630,162L1630,162L1632,162L1632,162L1634,162L1634,167L1636,167L1636,166L1638,166L1638,167L1640,167L1640,162L1642,162L1642,164L1644,164L1644,162L1646,162L1646,163L1648,163L1648,164L1650,164L1650,162L1652,162L1652,162L1654,162L1654,166L1656,166L1656,167L1658,167L1658,162L1660,162L1660,162L1662,162L1662,162L1664,162L1664,162L1666,162L1666,162L1668,162L1668,162L1670,162L1670,162L1672,162L1672,162L1674,162L1674,167L1676,167L1676,168L1678,168L1678,167L1680,167L1680,167L1682,167L1682,165L1684,165L1684,167L1686,167L1686,165L1688,165L1688,162L1690,162L1690,167L1692,167L1692,164L1694,164L1694,169L1696,169L1696,170L1698,170L1698,171L1700,171L1700,185L1702,185L1702,183L1704,183L1704,168L1706,168L1706,162L1708,162L1708,162L1710,162L1710,162L1712,162L1712,162L1714,162L1714,162L1716,162L1716,162L1718,162L1718,162L1720,162L1720,163L1722,163L1722,162L1724,162L1724,167L1726,167L1726,166L1728,166L1728,164L1730,164L1730,164L1732,164L1732,165L1734,165L1734,165L1736,165L1736,168L1738,168L1738,162L1740,162L1740,162L1742,162L1742,162L1744,162L1744,162L1746,162L1746,162L1748,162L1748,162L1750,162L1750,162L1752,162L1752,162L1754,162L1754,166L1756,166L1756,165L1758,165L1758,167L1760,167L1760,164L1762,164L1762,162L1764,162L1764,162L1766,162L1766,162L1768,162L1768,162L1770,162L1770,169L1772,169L1772,169L1774,169L1774,162L1776,162L1776,162L1778,162L1778,169L1780,169L1780,169L1782,169L1782,174L1784,174L1784,189L1786,189L1786,182L1788,182L1788,171L1790,171L1790,162L1792,162L1792,162L1794,162L1794,162L1796,162L1796,162L1798,162L1798,162L1800,162L1800,162L1802,162L1802,162L1804,162L1804,162L1806,162L1806,162L1808,162L1808,165L1810,165L1810,166L1812,166L1812,166L1814,166L1814,167L1816,167L1816,168L1818,168L1818,167L1820,167L1820,162L1822,162L1822,162L1824,162L1824,162L1826,162L1826,162L1828,162L1828,162L1830,162L1830,162L1832,162L1832,162L1834,162L1834,167L1836,167L1836,168L1838,168L1838,167L1840,167L1840,163L1842,163L1842,167L1844,167L1844,166L1846,166L1846,166L1848,166L1848,169L1850,169L1850,167L1852,167L1852,167L1854,167L1854,162L1856,162L1856,166L1858,166L1858,166L1860,166L1860,167L1862,167L1862,168L1864,168L1864,162L1866,162L1866,169L1868,169L1868,186L1870,186L1870,180L1872,180L1872,170L1874,170L1874,162L1876,162L1876,162L1878,162L1878,162L1880,162L1880,167L1882,167L1882,164L1884,164L1884,164L1886,164L1886,162L1888,162L1888,202Z" fill="url(#gk)"/>
<path d="M651.5,168V202M653.5,168V202M661.5,163V202M663.5,163V202M665.5,173V202M667.5,173V202M669.5,174V202M671.5,178V202M673.5,172V202M675.5,174V202M677.5,186V202M679.5,182V202M681.5,170V202M689.5,162V202M691.5,167V202M693.5,167V202M695.5,167V202M697.5,173V202M699.5,168V202M701.5,168V202M703.5,174V202M705.5,188V202M707.5,184V202M709.5,171V202M717.5,170V202M719.5,170V202M721.5,170V202M723.5,166V202M725.5,171V202M727.5,172V202M729.5,168V202M731.5,174V202M733.5,173V202M735.5,190V202M737.5,183V202M739.5,170V202M747.5,165V202M749.5,169V202M751.5,167V202M753.5,171V202M755.5,167V202M757.5,162V202M759.5,173V202M761.5,173V202M763.5,173V202M765.5,187V202M767.5,182V202M769.5,170V202M777.5,169V202M779.5,162V202M781.5,169V202M783.5,165V202M785.5,167V202M787.5,162V202M789.5,172V202M791.5,169V202M793.5,173V202M795.5,171V202M797.5,172V202M799.5,174V202M801.5,187V202M803.5,183V202M805.5,168V202M813.5,167V202M815.5,170V202M817.5,165V202M819.5,167V202M821.5,167V202M823.5,170V202M825.5,172V202M827.5,173V202M829.5,171V202M831.5,170V202M833.5,173V202M835.5,187V202M837.5,180V202M839.5,168V202M847.5,164V202M849.5,166V202M851.5,169V202M857.5,170V202M859.5,169V202M861.5,171V202M863.5,169V202M865.5,171V202M867.5,167V202M869.5,162V202M871.5,162V202M873.5,170V202M875.5,173V202M877.5,171V202M879.5,189V202M881.5,181V202M883.5,169V202M891.5,169V202M893.5,165V202M895.5,168V202M897.5,166V202M899.5,167V202M901.5,167V202M903.5,162V202M905.5,164V202M907.5,169V202M909.5,167V202M911.5,168V202M913.5,166V202M915.5,165V202M917.5,167V202M919.5,167V202M921.5,173V202M923.5,185V202M925.5,183V202M927.5,170V202M935.5,162V202M937.5,164V202M939.5,167V202M941.5,169V202M943.5,167V202M945.5,165V202M947.5,165V202M949.5,162V202M951.5,170V202M953.5,169V202M955.5,168V202M957.5,172V202M959.5,186V202M961.5,180V202M963.5,171V202M971.5,166V202M973.5,166V202M975.5,162V202M977.5,166V202M979.5,164V202M981.5,168V202M983.5,169V202M985.5,166V202M987.5,168V202M989.5,170V202M991.5,162V202M993.5,162V202M995.5,171V202M997.5,187V202M999.5,184V202M1001.5,171V202M1009.5,167V202M1011.5,165V202M1013.5,164V202M1015.5,164V202M1021.5,168V202M1023.5,169V202M1025.5,162V202M1027.5,169V202M1029.5,162V202M1031.5,166V202M1033.5,162V202M1035.5,169V202M1037.5,171V202M1039.5,167V202M1041.5,171V202M1043.5,187V202M1045.5,184V202M1047.5,170V202M1055.5,162V202M1057.5,168V202M1059.5,166V202M1061.5,167V202M1067.5,165V202M1069.5,169V202M1071.5,166V202M1073.5,169V202M1075.5,162V202M1077.5,165V202M1079.5,167V202M1081.5,167V202M1083.5,168V202M1085.5,166V202M1087.5,170V202M1089.5,188V202M1091.5,181V202M1093.5,170V202M1101.5,164V202M1103.5,167V202M1105.5,164V202M1107.5,165V202M1109.5,166V202M1111.5,163V202M1113.5,165V202M1115.5,162V202M1117.5,166V202M1119.5,168V202M1121.5,169V202M1123.5,162V202M1131.5,164V202M1133.5,162V202M1135.5,167V202M1137.5,171V202M1139.5,170V202M1141.5,170V202M1143.5,162V202M1145.5,166V202M1147.5,168V202M1149.5,170V202M1151.5,172V202M1153.5,189V202M1155.5,183V202M1157.5,168V202M1165.5,164V202M1167.5,162V202M1169.5,165V202M1171.5,162V202M1173.5,167V202M1175.5,168V202M1177.5,165V202M1179.5,164V202M1181.5,169V202M1183.5,166V202M1185.5,166V202M1187.5,167V202M1189.5,169V202M1191.5,162V202M1193.5,170V202M1195.5,162V202M1197.5,171V202M1199.5,173V202M1201.5,190V202M1203.5,181V202M1205.5,168V202M1213.5,162V202M1215.5,167V202M1217.5,164V202M1219.5,168V202M1221.5,168V202M1223.5,162V202M1225.5,166V202M1227.5,168V202M1243.5,166V202M1245.5,162V202M1247.5,167V202M1249.5,164V202M1251.5,170V202M1253.5,162V202M1255.5,162V202M1257.5,173V202M1259.5,186V202M1261.5,181V202M1263.5,169V202M1271.5,164V202M1273.5,163V202M1275.5,167V202M1277.5,166V202M1279.5,166V202M1281.5,162V202M1283.5,165V202M1299.5,164V202M1301.5,166V202M1303.5,162V202M1305.5,165V202M1307.5,167V202M1309.5,162V202M1311.5,167V202M1313.5,166V202M1315.5,169V202M1317.5,189V202M1319.5,184V202M1321.5,171V202M1331.5,167V202M1333.5,165V202M1335.5,163V202M1337.5,168V202M1339.5,164V202M1341.5,168V202M1343.5,163V202M1345.5,168V202M1347.5,167V202M1363.5,162V202M1365.5,165V202M1367.5,167V202M1369.5,169V202M1371.5,162V202M1373.5,164V202M1375.5,166V202M1377.5,168V202M1379.5,170V202M1381.5,171V202M1383.5,187V202M1385.5,181V202M1387.5,169V202M1397.5,162V202M1399.5,167V202M1401.5,166V202M1403.5,162V202M1405.5,167V202M1407.5,165V202M1409.5,163V202M1411.5,162V202M1427.5,167V202M1429.5,166V202M1431.5,168V202M1433.5,162V202M1435.5,169V202M1437.5,167V202M1439.5,166V202M1441.5,167V202M1443.5,165V202M1445.5,171V202M1447.5,190V202M1449.5,182V202M1451.5,171V202M1461.5,162V202M1463.5,163V202M1465.5,167V202M1467.5,162V202M1469.5,167V202M1471.5,168V202M1473.5,162V202M1475.5,163V202M1477.5,162V202M1479.5,163V202M1481.5,163V202M1483.5,167V202M1485.5,163V202M1487.5,167V202M1489.5,164V202M1491.5,165V202M1507.5,166V202M1509.5,168V202M1511.5,166V202M1513.5,169V202M1515.5,162V202M1517.5,166V202M1519.5,162V202M1521.5,166V202M1523.5,167V202M1525.5,162V202M1527.5,171V202M1529.5,188V202M1531.5,182V202M1533.5,168V202M1547.5,163V202M1549.5,168V202M1551.5,165V202M1553.5,168V202M1555.5,165V202M1557.5,162V202M1559.5,166V202M1561.5,162V202M1563.5,164V202M1565.5,168V202M1567.5,162V202M1569.5,166V202M1571.5,168V202M1573.5,163V202M1575.5,162V202M1591.5,162V202M1593.5,184V202M1595.5,184V202M1597.5,167V202M1599.5,165V202M1601.5,169V202M1603.5,169V202M1605.5,168V202M1607.5,166V202M1609.5,162V202M1611.5,162V202M1613.5,169V202M1615.5,172V202M1617.5,186V202M1619.5,183V202M1621.5,170V202M1633.5,162V202M1635.5,167V202M1637.5,166V202M1639.5,167V202M1641.5,162V202M1643.5,164V202M1645.5,162V202M1647.5,163V202M1649.5,164V202M1651.5,162V202M1653.5,162V202M1655.5,166V202M1657.5,167V202M1673.5,162V202M1675.5,167V202M1677.5,168V202M1679.5,167V202M1681.5,167V202M1683.5,165V202M1685.5,167V202M1687.5,165V202M1689.5,162V202M1691.5,167V202M1693.5,164V202M1695.5,169V202M1697.5,170V202M1699.5,171V202M1701.5,185V202M1703.5,183V202M1705.5,168V202M1721.5,163V202M1723.5,162V202M1725.5,167V202M1727.5,166V202M1729.5,164V202M1731.5,164V202M1733.5,165V202M1735.5,165V202M1737.5,168V202M1739.5,162V202M1755.5,166V202M1757.5,165V202M1759.5,167V202M1761.5,164V202M1763.5,162V202M1765.5,162V202M1767.5,162V202M1769.5,162V202M1771.5,169V202M1773.5,169V202M1775.5,162V202M1777.5,162V202M1779.5,169V202M1781.5,169V202M1783.5,174V202M1785.5,189V202M1787.5,182V202M1789.5,171V202M1807.5,162V202M1809.5,165V202M1811.5,166V202M1813.5,166V202M1815.5,167V202M1817.5,168V202M1819.5,167V202M1835.5,167V202M1837.5,168V202M1839.5,167V202M1841.5,163V202M1843.5,167V202M1845.5,166V202M1847.5,166V202M1849.5,169V202M1851.5,167V202M1853.5,167V202M1855.5,162V202M1857.5,166V202M1859.5,166V202M1861.5,167V202M1863.5,168V202M1865.5,162V202M1867.5,169V202M1869.5,186V202M1871.5,180V202M1873.5,170V202M1881.5,167V202M1883.5,164V202M1885.5,164V202M1887.5,162V202" stroke="#abadb9" stroke-width="1" fill="none"/>
<path d="M655.5,162V202M657.5,162V202M659.5,162V202M683.5,162V202M685.5,162V202M687.5,162V202M711.5,162V202M715.5,162V202M741.5,162V202M745.5,162V202M773.5,162V202M775.5,162V202M807.5,162V202M809.5,162V202M841.5,162V202M845.5,162V202M853.5,162V202M885.5,162V202M887.5,162V202M889.5,162V202M931.5,162V202M1003.5,162V202M1007.5,162V202M1049.5,162V202M1051.5,162V202M1053.5,162V202M1065.5,162V202M1095.5,162V202M1097.5,162V202M1099.5,162V202M1125.5,162V202M1127.5,162V202M1129.5,162V202M1159.5,162V202M1163.5,162V202M1229.5,162V202M1231.5,162V202M1239.5,162V202M1265.5,162V202M1269.5,162V202M1285.5,162V202M1287.5,162V202M1293.5,162V202M1297.5,162V202M1323.5,162V202M1325.5,162V202M1349.5,162V202M1351.5,162V202M1353.5,162V202M1357.5,162V202M1389.5,162V202M1393.5,162V202M1395.5,162V202M1413.5,162V202M1415.5,162V202M1417.5,162V202M1419.5,162V202M1421.5,162V202M1423.5,162V202M1425.5,162V202M1455.5,162V202M1493.5,162V202M1495.5,162V202M1497.5,162V202M1499.5,162V202M1501.5,162V202M1503.5,162V202M1505.5,162V202M1537.5,162V202M1539.5,162V202M1543.5,162V202M1545.5,162V202M1579.5,162V202M1581.5,162V202M1583.5,162V202M1585.5,162V202M1587.5,162V202M1589.5,162V202M1623.5,162V202M1625.5,162V202M1627.5,162V202M1629.5,162V202M1631.5,162V202M1659.5,162V202M1661.5,162V202M1667.5,162V202M1669.5,162V202M1671.5,162V202M1709.5,162V202M1711.5,162V202M1713.5,162V202M1715.5,162V202M1717.5,162V202M1719.5,162V202M1741.5,162V202M1743.5,162V202M1745.5,162V202M1747.5,162V202M1751.5,162V202M1753.5,162V202M1793.5,162V202M1795.5,162V202M1799.5,162V202M1801.5,162V202M1803.5,162V202M1805.5,162V202M1821.5,162V202M1823.5,162V202M1825.5,162V202M1829.5,162V202M1833.5,162V202M1875.5,162V202M1877.5,162V202" stroke="#aab0c6" stroke-width="1" stroke-opacity="0.95" fill="none"/>
<rect x="841.5" y="162.3" width="10.5" height="39.4" rx="3.5" fill="url(#gkb)" stroke="#566ab2" stroke-width="0.9"/>
<rect x="1006" y="162.3" width="10" height="39.4" rx="3.5" fill="url(#gkb)" stroke="#566ab2" stroke-width="0.9"/>
<rect x="1052" y="162.3" width="9.5" height="39.4" rx="3.5" fill="url(#gkb)" stroke="#566ab2" stroke-width="0.9"/>
<rect x="1098" y="162.3" width="26" height="39.4" rx="3.5" fill="url(#gkb)" stroke="#566ab2" stroke-width="0.9"/>
<rect x="1210.5" y="162.3" width="17" height="39.4" rx="3.5" fill="url(#gkb)" stroke="#566ab2" stroke-width="0.9"/>
<rect x="1270" y="162.3" width="13.5" height="39.4" rx="3.5" fill="url(#gkb)" stroke="#566ab2" stroke-width="0.9"/>
<rect x="1330" y="162.3" width="18" height="39.4" rx="3.5" fill="url(#gkb)" stroke="#566ab2" stroke-width="0.9"/>
<rect x="1394" y="162.3" width="17.5" height="39.4" rx="3.5" fill="url(#gkb)" stroke="#566ab2" stroke-width="0.9"/>
<rect x="1460" y="162.3" width="31.5" height="39.4" rx="3.5" fill="url(#gkb)" stroke="#566ab2" stroke-width="0.9"/>
<rect x="1544" y="162.3" width="31.5" height="39.4" rx="3.5" fill="url(#gkb)" stroke="#566ab2" stroke-width="0.9"/>
<rect x="1632" y="162.3" width="26" height="39.4" rx="3.5" fill="url(#gkb)" stroke="#566ab2" stroke-width="0.9"/>
<rect x="1718.5" y="162.3" width="21" height="39.4" rx="3.5" fill="url(#gkb)" stroke="#566ab2" stroke-width="0.9"/>
<rect x="1804" y="162.3" width="15.5" height="39.4" rx="3.5" fill="url(#gkb)" stroke="#566ab2" stroke-width="0.9"/>
</g>
<g id="memory">
<rect x="676" y="208" width="4" height="48" fill="#f4f4f4"/>
<rect x="676" y="254" width="4" height="2" fill="#ff1a1a"/>
<rect x="704" y="208" width="4" height="48" fill="#f4f4f4"/>
<rect x="704" y="254" width="2" height="2" fill="#ff1a1a"/>
<rect x="706" y="255" width="2" height="1" fill="#ff1a1a"/>
<rect x="734" y="208" width="4" height="48" fill="#f4f4f4"/>
<rect x="734" y="254" width="2" height="2" fill="#ff1a1a"/>
<rect x="736" y="255" width="2" height="1" fill="#ff1a1a"/>
<rect x="764" y="208" width="4" height="48" fill="#f4f4f4"/>
<rect x="764" y="254" width="4" height="2" fill="#ff1a1a"/>
<rect x="800" y="208" width="4" height="48" fill="#f4f4f4"/>
<rect x="800" y="254" width="2" height="2" fill="#ff1a1a"/>
<rect x="802" y="255" width="2" height="1" fill="#ff1a1a"/>
<rect x="834" y="208" width="4" height="48" fill="#f4f4f4"/>
<rect x="834" y="254" width="4" height="2" fill="#ff1a1a"/>
<rect x="878" y="208" width="4" height="48" fill="#f4f4f4"/>
<rect x="878" y="254" width="2" height="2" fill="#ff1a1a"/>
<rect x="880" y="255" width="2" height="1" fill="#ff1a1a"/>
<rect x="922" y="208" width="4" height="48" fill="#f4f4f4"/>
<rect x="922" y="254" width="4" height="2" fill="#ff1a1a"/>
<rect x="958" y="208" width="4" height="48" fill="#f4f4f4"/>
<rect x="958" y="254" width="2" height="2" fill="#ff1a1a"/>
<rect x="960" y="255" width="2" height="1" fill="#ff1a1a"/>
<rect x="996" y="208" width="4" height="48" fill="#f4f4f4"/>
<rect x="996" y="254" width="2" height="2" fill="#ff1a1a"/>
<rect x="998" y="255" width="2" height="1" fill="#ff1a1a"/>
<rect x="1042" y="208" width="4" height="48" fill="#f4f4f4"/>
<rect x="1042" y="254" width="2" height="2" fill="#ff1a1a"/>
<rect x="1044" y="255" width="2" height="1" fill="#ff1a1a"/>
<rect x="1088" y="208" width="4" height="48" fill="#f4f4f4"/>
<rect x="1088" y="254" width="4" height="2" fill="#ff1a1a"/>
<rect x="1152" y="208" width="4" height="48" fill="#f4f4f4"/>
<rect x="1152" y="254" width="2" height="2" fill="#ff1a1a"/>
<rect x="1154" y="255" width="2" height="1" fill="#ff1a1a"/>
<rect x="1200" y="208" width="4" height="48" fill="#f4f4f4"/>
<rect x="1200" y="254" width="4" height="2" fill="#ff1a1a"/>
<rect x="1258" y="208" width="4" height="48" fill="#f4f4f4"/>
<rect x="1258" y="254" width="2" height="2" fill="#ff1a1a"/>
<rect x="1260" y="255" width="2" height="1" fill="#ff1a1a"/>
<rect x="1316" y="208" width="4" height="48" fill="#f4f4f4"/>
<rect x="1316" y="254" width="4" height="2" fill="#ff1a1a"/>
<rect x="1382" y="208" width="4" height="48" fill="#f4f4f4"/>
<rect x="1382" y="254" width="2" height="2" fill="#ff1a1a"/>
<rect x="1384" y="255" width="2" height="1" fill="#ff1a1a"/>
<rect x="1446" y="208" width="4" height="48" fill="#f4f4f4"/>
<rect x="1446" y="254" width="4" height="2" fill="#ff1a1a"/>
<rect x="1528" y="208" width="4" height="48" fill="#f4f4f4"/>
<rect x="1528" y="254" width="2" height="2" fill="#ff1a1a"/>
<rect x="1530" y="255" width="2" height="1" fill="#ff1a1a"/>
<rect x="1616" y="208" width="4" height="48" fill="#f4f4f4"/>
<rect x="1616" y="254" width="4" height="2" fill="#ff1a1a"/>
<rect x="1700" y="208" width="4" height="48" fill="#f4f4f4"/>
<rect x="1700" y="254" width="2" height="2" fill="#ff1a1a"/>
<rect x="1702" y="255" width="2" height="1" fill="#ff1a1a"/>
<rect x="1784" y="208" width="4" height="48" fill="#f4f4f4"/>
<rect x="1784" y="254" width="4" height="2" fill="#ff1a1a"/>
<rect x="1868" y="208" width="4" height="48" fill="#f4f4f4"/>
<rect x="1868" y="254" width="2" height="2" fill="#ff1a1a"/>
<rect x="1870" y="255" width="2" height="1" fill="#ff1a1a"/>
<rect x="634" y="208" width="2" height="48" fill="#f4f4f4"/>
<rect x="634" y="254" width="2" height="2" fill="#ff1a1a"/>
<rect x="638" y="208" width="2" height="48" fill="#f4f4f4"/>
<rect x="638" y="254" width="2" height="2" fill="#ff1a1a"/>
<rect x="648" y="208" width="2" height="38" fill="#f4f4f4"/>
<rect x="648" y="246" width="2" height="10" fill="#55ee00"/>
</g>
<g id="threads">
<rect x="218" y="304" width="206" height="34" fill="#909090"/>
<rect x="602" y="304" width="1286" height="34" fill="#909090"/>
<rect x="424" y="304" width="2" height="11" fill="#dadada"/>
<rect x="424" y="315" width="2" height="23" fill="#909090"/>
<rect x="426" y="304" width="2" height="32" fill="#dadada"/>
<rect x="426" y="336" width="2" height="2" fill="#909090"/>
<rect x="428" y="304" width="2" height="28" fill="#dadada"/>
<rect x="428" y="332" width="2" height="6" fill="#909090"/>
<rect x="434" y="304" width="2" height="28" fill="#dadada"/>
<rect x="434" y="332" width="2" height="6" fill="#909090"/>
<rect x="436" y="304" width="2" height="31" fill="#dadada"/>
<rect x="436" y="335" width="2" height="3" fill="#909090"/>
<rect x="442" y="304" width="2" height="27" fill="#dadada"/>
<rect x="442" y="331" width="2" height="7" fill="#909090"/>
<rect x="444" y="304" width="2" height="23" fill="#dadada"/>
<rect x="444" y="327" width="2" height="11" fill="#909090"/>
<rect x="446" y="304" width="2" height="33" fill="#dadada"/>
<rect x="446" y="337" width="2" height="1" fill="#909090"/>
<rect x="462" y="304" width="2" height="28" fill="#dadada"/>
<rect x="462" y="332" width="2" height="6" fill="#909090"/>
<rect x="538" y="304" width="2" height="25" fill="#dadada"/>
<rect x="538" y="329" width="2" height="9" fill="#909090"/>
<rect x="540" y="304" width="2" height="26" fill="#dadada"/>
<rect x="540" y="330" width="2" height="8" fill="#909090"/>
<rect x="542" y="304" width="2" height="2" fill="#dadada"/>
<rect x="542" y="306" width="2" height="32" fill="#909090"/>
<rect x="544" y="304" width="4" height="34" fill="#909090"/>
<rect x="548" y="304" width="2" height="33" fill="#dadada"/>
<rect x="548" y="337" width="2" height="1" fill="#909090"/>
<rect x="592" y="304" width="2" height="26" fill="#dadada"/>
<rect x="592" y="330" width="2" height="8" fill="#909090"/>
<rect x="600" y="304" width="2" height="21" fill="#dadada"/>
<rect x="600" y="325" width="2" height="13" fill="#909090"/>
<rect x="640" y="304" width="2" height="1" fill="#dadada"/>
<rect x="642" y="304" width="2" height="4" fill="#dadada"/>
<rect x="218" y="340" width="1670" height="12" fill="#0b5226"/>
<rect x="424" y="340" width="178" height="12" fill="#977b6e"/>
<rect x="424" y="346" width="6" height="6" fill="#0b5226"/>
<rect x="434" y="348" width="4" height="4" fill="#0b5226"/>
<rect x="442" y="348" width="2" height="4" fill="#0b5226"/>
<rect x="444" y="346" width="2" height="6" fill="#0b5226"/>
<rect x="446" y="348" width="2" height="4" fill="#0b5226"/>
<rect x="462" y="348" width="2" height="4" fill="#0b5226"/>
<rect x="538" y="346" width="6" height="6" fill="#0b5226"/>
<rect x="544" y="340" width="4" height="12" fill="#0b5226"/>
<rect x="548" y="348" width="2" height="4" fill="#0b5226"/>
<rect x="592" y="348" width="2" height="4" fill="#0b5226"/>
<rect x="600" y="346" width="2" height="6" fill="#0b5226"/>
<rect x="640" y="340" width="4" height="6" fill="#977b6e"/>
<rect x="540" y="496" width="4" height="34" fill="#dadada"/>
<rect x="540" y="515" width="2" height="15" fill="#909090"/>
<rect x="542" y="528" width="2" height="2" fill="#909090"/>
<rect x="1040" y="496" width="2" height="22" fill="#dadada"/>
<rect x="1040" y="518" width="2" height="12" fill="#909090"/>
<rect x="218" y="532" width="1670" height="12" fill="#977b6e"/>
<rect x="540" y="538" width="4" height="6" fill="#0b5226"/>
<rect x="540" y="538" width="2" height="2" fill="#977b6e"/>
<rect x="1040" y="538" width="2" height="6" fill="#0b5226"/>
<rect x="218" y="824" width="1670" height="12" fill="#977b6e"/>
</g>
<g id="os">
<rect x="424" y="358" width="22" height="40" fill="url(#gp)"/>
<rect x="424" y="358" width="1" height="40" fill="#f5dbb3"/>
<rect x="427.5" y="358" width="1" height="40" fill="#f5dbb3"/>
<rect x="433.5" y="358" width="1" height="40" fill="#f5dbb3"/>
<rect x="436" y="358" width="1" height="40" fill="#f5dbb3"/>
<rect x="441.5" y="358" width="1" height="40" fill="#f5dbb3"/>
<rect x="431" y="358" width="3" height="8" fill="#fff"/>
<rect x="440" y="358" width="4" height="6" fill="#f4f4f4"/>
<rect x="433" y="366" width="1" height="32" fill="#c8b69c"/>
<rect x="443" y="372" width="1" height="26" fill="#c8b69c"/>
<rect x="446.5" y="358.5" width="15" height="39" rx="3.5" fill="url(#gp)" stroke="#b5a48c" stroke-width="1"/>
<rect x="464.5" y="358.5" width="75" height="39" rx="3.5" fill="url(#gp)" stroke="#b5a48c" stroke-width="1"/>
<rect x="540" y="358" width="4" height="40" fill="#f4f4f4"/>
<rect x="541" y="368" width="1" height="30" fill="#f0dcbd"/>
<rect x="548" y="358" width="2" height="40" fill="#fdebcf"/>
<rect x="550.5" y="358.5" width="41" height="39" rx="3.5" fill="url(#gp)" stroke="#b5a48c" stroke-width="1"/>
<rect x="592" y="358" width="10" height="40" fill="url(#gp)"/>
<rect x="592" y="364" width="1" height="34" fill="#c8b69c"/>
<rect x="601" y="358" width="1" height="40" fill="#f3d3a4"/>
<rect x="640" y="358" width="4" height="40" fill="#f4f4f4"/>
<rect x="642" y="394" width="2" height="4" fill="#e7c89a"/>
<rect x="212.5" y="550.5" width="327" height="39" rx="3.5" fill="url(#gp)" stroke="#b5a48c" stroke-width="1"/>
<rect x="218" y="549" width="14" height="42" fill="url(#fl)"/>
<rect x="542.5" y="550.5" width="497" height="39" rx="3.5" fill="url(#gp)" stroke="#b5a48c" stroke-width="1"/>
<rect x="1041.5" y="550.5" width="852" height="39" rx="3.5" fill="url(#gp)" stroke="#b5a48c" stroke-width="1"/>
<rect x="1874" y="549" width="14" height="42" fill="url(#fr)"/>
<rect x="212.5" y="842.5" width="1681" height="39" rx="3.5" fill="url(#gp)" stroke="#b5a48c" stroke-width="1"/>
<rect x="218" y="841" width="14" height="42" fill="url(#fl)"/>
<rect x="1874" y="841" width="14" height="42" fill="url(#fr)"/>
</g>
<g id="api">
<rect x="308" y="404" width="2" height="40" fill="#f4f4f4"/>
<rect x="312" y="404" width="2" height="40" fill="#f4f4f4"/>
<rect x="316" y="404" width="2" height="40" fill="#f4f4f4"/>
<rect x="338" y="404" width="2" height="40" fill="#f4f4f4"/>
<rect x="344" y="404" width="2" height="40" fill="#f4f4f4"/>
<rect x="352" y="404" width="2" height="40" fill="#f4f4f4"/>
<rect x="364" y="404" width="2" height="40" fill="#f4f4f4"/>
<rect x="374" y="404" width="2" height="40" fill="#f4f4f4"/>
<rect x="384" y="404" width="2" height="40" fill="#f4f4f4"/>
<rect x="392" y="404" width="2" height="40" fill="#f4f4f4"/>
<rect x="404" y="404" width="2" height="40" fill="#f4f4f4"/>
<rect x="418" y="404" width="2" height="40" fill="#f4f4f4"/>
<rect x="224" y="438" width="4" height="6" fill="#7686cf"/>
<rect x="276" y="441" width="4" height="3" fill="#7686cf"/>
<rect x="308" y="438" width="2" height="6" fill="#7686cf"/>
<rect x="312" y="435" width="2" height="9" fill="#7686cf"/>
<rect x="316" y="436" width="2" height="8" fill="#7686cf"/>
<rect x="338" y="439" width="2" height="5" fill="#7686cf"/>
<rect x="344" y="439" width="2" height="5" fill="#7686cf"/>
<rect x="352" y="439" width="2" height="5" fill="#7686cf"/>
<rect x="364" y="438" width="2" height="6" fill="#7686cf"/>
<rect x="374" y="439" width="2" height="5" fill="#7686cf"/>
<rect x="384" y="440" width="2" height="4" fill="#7686cf"/>
<rect x="392" y="440" width="2" height="4" fill="#7686cf"/>
<rect x="404" y="440" width="2" height="4" fill="#7686cf"/>
<rect x="410" y="442" width="4" height="2" fill="#7686cf"/>
<rect x="418" y="439" width="2" height="5" fill="#7686cf"/>
<rect x="546.5" y="404.5" width="57" height="39" rx="4" fill="url(#gkb)" stroke="#43558f" stroke-width="1"/>
<rect x="605" y="432" width="2" height="12" fill="#c8c8c8"/>
<rect x="608.5" y="404.5" width="9" height="39" rx="3" fill="url(#gkb)" stroke="#43558f" stroke-width="1"/>
<rect x="618.5" y="404.5" width="15" height="39" rx="3" fill="url(#gkb)" stroke="#43558f" stroke-width="1"/>
<rect x="634" y="404" width="1254" height="40" fill="#f4f4f4"/>
<rect x="644" y="404" width="1244" height="40" fill="url(#gg)"/>
<rect x="634" y="404" width="10" height="40" fill="#f4f4f4"/>
<rect x="635" y="422" width="1" height="22" fill="#b9b9b9"/>
<rect x="636" y="424" width="1" height="20" fill="#b9b9b9"/>
<rect x="637" y="414" width="1" height="30" fill="#b9b9b9"/>
<rect x="638" y="414" width="1" height="30" fill="#b9b9b9"/>
<rect x="639" y="441" width="1" height="3" fill="#b9b9b9"/>
<rect x="640" y="441" width="1" height="3" fill="#b9b9b9"/>
<rect x="641" y="425" width="1" height="19" fill="#b9b9b9"/>
<rect x="642" y="425" width="1" height="19" fill="#b9b9b9"/>
<rect x="640" y="441" width="2" height="3" fill="#7b90d8"/>
<path d="M645.5,405V444M647.5,405V444M649.5,405V444M651.5,405V444M653.5,405V444M655.5,405V444M657.5,405V444M659.5,405V444M661.5,405V444M663.5,405V444M665.5,405V444M667.5,405V444M669.5,405V444M671.5,405V444M673.5,405V444M675.5,405V444M677.5,405V444M679.5,405V444M681.5,405V444M683.5,405V444M685.5,405V444M687.5,405V444M689.5,405V444M691.5,405V444M693.5,405V444M695.5,405V444M697.5,405V444M699.5,405V444M701.5,405V444M703.5,405V444M705.5,405V444M707.5,405V444M709.5,405V444M711.5,405V444M713.5,405V444M715.5,405V444M717.5,405V444M719.5,405V444M721.5,405V444M723.5,405V444M725.5,405V444M727.5,405V444M729.5,405V444M731.5,405V444M733.5,405V444M735.5,405V444M737.5,405V444M739.5,405V444M741.5,405V444M743.5,405V444M745.5,405V444M747.5,405V444M749.5,405V444M751.5,405V444M753.5,405V444M755.5,405V444M757.5,405V444M759.5,405V444M761.5,405V444M763.5,405V444M765.5,405V444M767.5,405V444M769.5,405V444M771.5,405V444M773.5,405V444M775.5,405V444M777.5,405V444M779.5,405V444M781.5,405V444M783.5,405V444M785.5,405V444M787.5,405V444M789.5,405V444M791.5,405V444M793.5,405V444M795.5,405V444M797.5,405V444M799.5,405V444M801.5,405V444M803.5,405V444M805.5,405V444M807.5,405V444M809.5,405V444M811.5,405V444M813.5,405V444M815.5,405V444M817.5,405V444M819.5,405V444M821.5,405V444M823.5,405V444M825.5,405V444M827.5,405V444M829.5,405V444M831.5,405V444M833.5,405V444M835.5,405V444M837.5,405V444M839.5,405V444M841.5,405V444M843.5,405V444M845.5,405V444M847.5,405V444M849.5,405V444M851.5,405V444M853.5,405V444M855.5,405V444M857.5,405V444M859.5,405V444M861.5,405V444M863.5,405V444M865.5,405V444M867.5,405V444M869.5,405V444M871.5,405V444M873.5,405V444M875.5,405V444M877.5,405V444M879.5,405V444M881.5,405V444M883.5,405V444M885.5,405V444M887.5,405V444M889.5,405V444M891.5,405V444M893.5,405V444M895.5,405V444M897.5,405V444M899.5,405V444M901.5,405V444M903.5,405V444M905.5,405V444M907.5,405V444M909.5,405V444M911.5,405V444M913.5,405V444M915.5,405V444M917.5,405V444M919.5,405V444M921.5,405V444M923.5,405V444M925.5,405V444M927.5,405V444M929.5,405V444M931.5,405V444M933.5,405V444M935.5,405V444M937.5,405V444M939.5,405V444M941.5,405V444M943.5,405V444M945.5,405V444M947.5,405V444M949.5,405V444M951.5,405V444M953.5,405V444M955.5,405V444M957.5,405V444M959.5,405V444M961.5,405V444M963.5,405V444M965.5,405V444M967.5,405V444M969.5,405V444M971.5,405V444M973.5,405V444M975.5,405V444M977.5,405V444M979.5,405V444M981.5,405V444M983.5,405V444M985.5,405V444M987.5,405V444M989.5,405V444M991.5,405V444M993.5,405V444M995.5,405V444M997.5,405V444M999.5,405V444M1001.5,405V444M1003.5,405V444M1005.5,405V444M1007.5,405V444M1009.5,405V444M1011.5,405V444M1013.5,405V444M1015.5,405V444M1017.5,405V444M1019.5,405V444M1021.5,405V444M1023.5,405V444M1025.5,405V444M1027.5,405V444M1029.5,405V444M1031.5,405V444M1033.5,405V444M1035.5,405V444M1037.5,405V444M1039.5,405V444M1041.5,405V444M1043.5,405V444M1045.5,405V444M1047.5,405V444M1049.5,405V444M1051.5,405V444M1053.5,405V444M1055.5,405V444M1057.5,405V444M1059.5,405V444M1061.5,405V444M1063.5,405V444M1065.5,405V444M1067.5,405V444M1069.5,405V444M1071.5,405V444M1073.5,405V444M1075.5,405V444M1077.5,405V444M1079.5,405V444M1081.5,405V444M1083.5,405V444M1085.5,405V444M1087.5,405V444M1089.5,405V444M1091.5,405V444M1093.5,405V444M1095.5,405V444M1097.5,405V444M1099.5,405V444M1101.5,405V444M1103.5,405V444M1105.5,405V444M1107.5,405V444M1109.5,405V444M1111.5,405V444M1113.5,405V444M1115.5,405V444M1117.5,405V444M1119.5,405V444M1121.5,405V444M1123.5,405V444M1125.5,405V444M1127.5,405V444M1129.5,405V444M1131.5,405V444M1133.5,405V444M1135.5,405V444M1137.5,405V444M1139.5,405V444M1141.5,405V444M1143.5,405V444M1145.5,405V444M1147.5,405V444M1149.5,405V444M1151.5,405V444M1153.5,405V444M1155.5,405V444M1157.5,405V444M1159.5,405V444M1161.5,405V444M1163.5,405V444M1165.5,405V444M1167.5,405V444M1169.5,405V444M1171.5,405V444M1173.5,405V444M1175.5,405V444M1177.5,405V444M1179.5,405V444M1181.5,405V444M1183.5,405V444M1185.5,405V444M1187.5,405V444M1189.5,405V444M1191.5,405V444M1193.5,405V444M1195.5,405V444M1197.5,405V444M1199.5,405V444M1201.5,405V444M1203.5,405V444M1205.5,405V444M1207.5,405V444M1209.5,405V444M1211.5,405V444M1213.5,405V444M1215.5,405V444M1217.5,405V444M1219.5,405V444M1221.5,405V444M1223.5,405V444M1225.5,405V444M1227.5,405V444M1229.5,405V444M1231.5,405V444M1233.5,405V444M1235.5,405V444M1237.5,405V444M1239.5,405V444M1241.5,405V444M1243.5,405V444M1245.5,405V444M1247.5,405V444M1249.5,405V444M1251.5,405V444M1253.5,405V444M1255.5,405V444M1257.5,405V444M1259.5,405V444M1261.5,405V444M1263.5,405V444M1265.5,405V444M1267.5,405V444M1269.5,405V444M1271.5,405V444M1273.5,405V444M1275.5,405V444M1277.5,405V444M1279.5,405V444M1281.5,405V444M1283.5,405V444M1285.5,405V444M1287.5,405V444M1289.5,405V444M1291.5,405V444M1293.5,405V444M1295.5,405V444M1297.5,405V444M1299.5,405V444M1301.5,405V444M1303.5,405V444M1305.5,405V444M1307.5,405V444M1309.5,405V444M1311.5,405V444M1313.5,405V444M1315.5,405V444M1317.5,405V444M1319.5,405V444M1321.5,405V444M1323.5,405V444M1325.5,405V444M1327.5,405V444M1329.5,405V444M1331.5,405V444M1333.5,405V444M1335.5,405V444M1337.5,405V444M1339.5,405V444M1341.5,405V444M1343.5,405V444M1345.5,405V444M1347.5,405V444M1349.5,405V444M1351.5,405V444M1353.5,405V444M1355.5,405V444M1357.5,405V444M1359.5,405V444M1361.5,405V444M1363.5,405V444M1365.5,405V444M1367.5,405V444M1369.5,405V444M1371.5,405V444M1373.5,405V444M1375.5,405V444M1377.5,405V444M1379.5,405V444M1381.5,405V444M1383.5,405V444M1385.5,405V444M1387.5,405V444M1389.5,405V444M1391.5,405V444M1393.5,405V444M1395.5,405V444M1397.5,405V444M1399.5,405V444M1401.5,405V444M1403.5,405V444M1405.5,405V444M1407.5,405V444M1409.5,405V444M1411.5,405V444M1413.5,405V444M1415.5,405V444M1417.5,405V444M1419.5,405V444M1421.5,405V444M1423.5,405V444M1425.5,405V444M1427.5,405V444M1429.5,405V444M1431.5,405V444M1433.5,405V444M1435.5,405V444M1437.5,405V444M1439.5,405V444M1441.5,405V444M1443.5,405V444M1445.5,405V444M1447.5,405V444M1449.5,405V444M1451.5,405V444M1453.5,405V444M1455.5,405V444M1457.5,405V444M1459.5,405V444M1461.5,405V444M1463.5,405V444M1465.5,405V444M1467.5,405V444M1469.5,405V444M1471.5,405V444M1473.5,405V444M1475.5,405V444M1477.5,405V444M1479.5,405V444M1481.5,405V444M1483.5,405V444M1485.5,405V444M1487.5,405V444M1489.5,405V444M1491.5,405V444M1493.5,405V444M1495.5,405V444M1497.5,405V444M1499.5,405V444M1501.5,405V444M1503.5,405V444M1505.5,405V444M1507.5,405V444M1509.5,405V444M1511.5,405V444M1513.5,405V444M1515.5,405V444M1517.5,405V444M1519.5,405V444M1521.5,405V444M1523.5,405V444M1525.5,405V444M1527.5,405V444M1529.5,405V444M1531.5,405V444M1533.5,405V444M1535.5,405V444M1537.5,405V444M1539.5,405V444M1541.5,405V444M1543.5,405V444M1545.5,405V444M1547.5,405V444M1549.5,405V444M1551.5,405V444M1553.5,405V444M1555.5,405V444M1557.5,405V444M1559.5,405V444M1561.5,405V444M1563.5,405V444M1565.5,405V444M1567.5,405V444M1569.5,405V444M1571.5,405V444M1573.5,405V444M1575.5,405V444M1577.5,405V444M1579.5,405V444M1581.5,405V444M1583.5,405V444M1585.5,405V444M1587.5,405V444M1589.5,405V444M1591.5,405V444M1593.5,405V444M1595.5,405V444M1597.5,405V444M1599.5,405V444M1601.5,405V444M1603.5,405V444M1605.5,405V444M1607.5,405V444M1609.5,405V444M1611.5,405V444M1613.5,405V444M1615.5,405V444M1617.5,405V444M1619.5,405V444M1621.5,405V444M1623.5,405V444M1625.5,405V444M1627.5,405V444M1629.5,405V444M1631.5,405V444M1633.5,405V444M1635.5,405V444M1637.5,405V444M1639.5,405V444M1641.5,405V444M1643.5,405V444M1645.5,405V444M1647.5,405V444M1649.5,405V444M1651.5,405V444M1653.5,405V444M1655.5,405V444M1657.5,405V444M1659.5,405V444M1661.5,405V444M1663.5,405V444M1665.5,405V444M1667.5,405V444M1669.5,405V444M1671.5,405V444M1673.5,405V444M1675.5,405V444M1677.5,405V444M1679.5,405V444M1681.5,405V444M1683.5,405V444M1685.5,405V444M1687.5,405V444M1689.5,405V444M1691.5,405V444M1693.5,405V444M1695.5,405V444M1697.5,405V444M1699.5,405V444M1701.5,405V444M1703.5,405V444M1705.5,405V444M1707.5,405V444M1709.5,405V444M1711.5,405V444M1713.5,405V444M1715.5,405V444M1717.5,405V444M1719.5,405V444M1721.5,405V444M1723.5,405V444M1725.5,405V444M1727.5,405V444M1729.5,405V444M1731.5,405V444M1733.5,405V444M1735.5,405V444M1737.5,405V444M1739.5,405V444M1741.5,405V444M1743.5,405V444M1745.5,405V444M1747.5,405V444M1749.5,405V444M1751.5,405V444M1753.5,405V444M1755.5,405V444M1757.5,405V444M1759.5,405V444M1761.5,405V444M1763.5,405V444M1765.5,405V444M1767.5,405V444M1769.5,405V444M1771.5,405V444M1773.5,405V444M1775.5,405V444M1777.5,405V444M1779.5,405V444M1781.5,405V444M1783.5,405V444M1785.5,405V444M1787.5,405V444M1789.5,405V444M1791.5,405V444M1793.5,405V444M1795.5,405V444M1797.5,405V444M1799.5,405V444M1801.5,405V444M1803.5,405V444M1805.5,405V444M1807.5,405V444M1809.5,405V444M1811.5,405V444M1813.5,405V444M1815.5,405V444M1817.5,405V444M1819.5,405V444M1821.5,405V444M1823.5,405V444M1825.5,405V444M1827.5,405V444M1829.5,405V444M1831.5,405V444M1833.5,405V444M1835.5,405V444M1837.5,405V444M1839.5,405V444M1841.5,405V444M1843.5,405V444M1845.5,405V444M1847.5,405V444M1849.5,405V444M1851.5,405V444M1853.5,405V444M1855.5,405V444M1857.5,405V444M1859.5,405V444M1861.5,405V444M1863.5,405V444M1865.5,405V444M1867.5,405V444M1869.5,405V444M1871.5,405V444M1873.5,405V444M1875.5,405V444M1877.5,405V444M1879.5,405V444M1881.5,405V444M1883.5,405V444M1885.5,405V444M1887.5,405V444" stroke="#d6d6d6" stroke-width="1" stroke-opacity="0.6" fill="none"/>
<rect x="674" y="404" width="4" height="7" fill="#f4f4f4"/>
<rect x="672" y="404" width="2" height="2" fill="#f4f4f4"/>
<rect x="678" y="404" width="2" height="2" fill="#f4f4f4"/>
<rect x="702" y="404" width="4" height="6" fill="#f4f4f4"/>
<rect x="700" y="404" width="2" height="1.5" fill="#f4f4f4"/>
<rect x="706" y="404" width="2" height="1" fill="#f4f4f4"/>
<rect x="732" y="404" width="4" height="6" fill="#f4f4f4"/>
<rect x="730" y="404" width="2" height="1" fill="#f4f4f4"/>
<rect x="736" y="404" width="2" height="1" fill="#f4f4f4"/>
<rect x="764" y="404" width="4" height="7" fill="#f4f4f4"/>
<rect x="762" y="404" width="2" height="1.5" fill="#f4f4f4"/>
<rect x="768" y="404" width="2" height="1" fill="#f4f4f4"/>
<rect x="798" y="404" width="4" height="8" fill="#f4f4f4"/>
<rect x="796" y="404" width="2" height="2" fill="#f4f4f4"/>
<rect x="802" y="404" width="2" height="1" fill="#f4f4f4"/>
<rect x="832" y="404" width="4" height="6.5" fill="#f4f4f4"/>
<rect x="830" y="404" width="2" height="1" fill="#f4f4f4"/>
<rect x="836" y="404" width="2" height="3" fill="#f4f4f4"/>
<rect x="876" y="404" width="4" height="6.5" fill="#f4f4f4"/>
<rect x="874" y="404" width="2" height="1.5" fill="#f4f4f4"/>
<rect x="880" y="404" width="2" height="2" fill="#f4f4f4"/>
<rect x="920" y="404" width="4" height="6.5" fill="#f4f4f4"/>
<rect x="918" y="404" width="2" height="1.5" fill="#f4f4f4"/>
<rect x="924" y="404" width="2" height="1" fill="#f4f4f4"/>
<rect x="956" y="404" width="4" height="6" fill="#f4f4f4"/>
<rect x="954" y="404" width="2" height="1" fill="#f4f4f4"/>
<rect x="960" y="404" width="2" height="3" fill="#f4f4f4"/>
<rect x="994" y="404" width="4" height="8" fill="#f4f4f4"/>
<rect x="992" y="404" width="2" height="1" fill="#f4f4f4"/>
<rect x="998" y="404" width="2" height="1" fill="#f4f4f4"/>
<rect x="1040" y="404" width="4" height="6" fill="#f4f4f4"/>
<rect x="1038" y="404" width="2" height="1" fill="#f4f4f4"/>
<rect x="1044" y="404" width="2" height="1" fill="#f4f4f4"/>
<rect x="1088" y="404" width="4" height="6.5" fill="#f4f4f4"/>
<rect x="1086" y="404" width="2" height="1" fill="#f4f4f4"/>
<rect x="1092" y="404" width="2" height="1" fill="#f4f4f4"/>
<rect x="1150" y="404" width="4" height="7" fill="#f4f4f4"/>
<rect x="1148" y="404" width="2" height="1.5" fill="#f4f4f4"/>
<rect x="1154" y="404" width="2" height="1" fill="#f4f4f4"/>
<rect x="1194" y="404" width="7" height="6.5" fill="#f4f4f4"/>
<rect x="1192" y="404" width="2" height="1" fill="#f4f4f4"/>
<rect x="1201" y="404" width="2" height="3" fill="#f4f4f4"/>
<rect x="1256" y="404" width="4" height="6.5" fill="#f4f4f4"/>
<rect x="1254" y="404" width="2" height="1.5" fill="#f4f4f4"/>
<rect x="1260" y="404" width="2" height="2" fill="#f4f4f4"/>
<rect x="1314" y="404" width="6" height="6" fill="#f4f4f4"/>
<rect x="1312" y="404" width="2" height="1.5" fill="#f4f4f4"/>
<rect x="1320" y="404" width="2" height="2" fill="#f4f4f4"/>
<rect x="1380" y="404" width="4" height="6.5" fill="#f4f4f4"/>
<rect x="1378" y="404" width="2" height="1" fill="#f4f4f4"/>
<rect x="1384" y="404" width="2" height="2" fill="#f4f4f4"/>
<rect x="1446" y="404" width="3" height="6" fill="#f4f4f4"/>
<rect x="1444" y="404" width="2" height="1.5" fill="#f4f4f4"/>
<rect x="1449" y="404" width="2" height="2" fill="#f4f4f4"/>
<rect x="1526" y="404" width="4" height="6" fill="#f4f4f4"/>
<rect x="1524" y="404" width="2" height="2" fill="#f4f4f4"/>
<rect x="1530" y="404" width="2" height="3" fill="#f4f4f4"/>
<rect x="1614" y="404" width="6" height="7" fill="#f4f4f4"/>
<rect x="1612" y="404" width="2" height="1" fill="#f4f4f4"/>
<rect x="1620" y="404" width="2" height="2" fill="#f4f4f4"/>
<rect x="1698" y="404" width="4" height="7" fill="#f4f4f4"/>
<rect x="1696" y="404" width="2" height="1.5" fill="#f4f4f4"/>
<rect x="1702" y="404" width="2" height="2" fill="#f4f4f4"/>
<rect x="1782" y="404" width="4" height="7" fill="#f4f4f4"/>
<rect x="1780" y="404" width="2" height="1" fill="#f4f4f4"/>
<rect x="1786" y="404" width="2" height="2" fill="#f4f4f4"/>
<rect x="1866" y="404" width="4" height="8" fill="#f4f4f4"/>
<rect x="1864" y="404" width="2" height="2" fill="#f4f4f4"/>
<rect x="1870" y="404" width="2" height="1" fill="#f4f4f4"/>
<rect x="684" y="404" width="5" height="40" fill="url(#ggr)"/>
<rect x="712" y="404" width="5" height="40" fill="url(#ggr)"/>
<rect x="742" y="404" width="5" height="40" fill="url(#ggr)"/>
<rect x="774" y="404" width="5" height="40" fill="url(#ggr)"/>
<rect x="808" y="404" width="5.3" height="40" fill="url(#ggr)"/>
<rect x="930" y="404" width="7.5" height="40" fill="url(#ggr)"/>
<rect x="1388" y="404" width="3.7" height="40" fill="url(#ggr)"/>
<rect x="1454" y="404" width="3.5" height="40" fill="url(#ggr)"/>
<rect x="1536" y="404" width="3.5" height="40" fill="url(#ggr)"/>
<rect x="1626" y="404" width="3.5" height="40" fill="url(#ggr)"/>
<rect x="1708" y="404" width="5.3" height="40" fill="url(#ggr)"/>
<rect x="1794" y="404" width="5.5" height="40" fill="url(#ggr)"/>
<rect x="1838" y="404" width="3.5" height="40" fill="url(#ggr)"/>
<rect x="1878" y="404" width="5" height="40" fill="url(#ggr)"/>
<rect x="646" y="404" width="1.5" height="40" fill="#58cc50"/>
<rect x="708" y="404" width="1.5" height="40" fill="#58cc50"/>
<rect x="770" y="404" width="1.5" height="40" fill="#58cc50"/>
<rect x="824" y="404" width="1.5" height="40" fill="#58cc50"/>
<rect x="868" y="404" width="1.5" height="40" fill="#58cc50"/>
<rect x="884" y="404" width="1.5" height="40" fill="#58cc50"/>
<rect x="986" y="404" width="1.5" height="40" fill="#58cc50"/>
<rect x="1002" y="404" width="1.5" height="40" fill="#58cc50"/>
<rect x="1048" y="404" width="1.5" height="40" fill="#58cc50"/>
<rect x="1070" y="404" width="1.5" height="40" fill="#58cc50"/>
<rect x="1132" y="404" width="1.5" height="40" fill="#58cc50"/>
<rect x="1158" y="404" width="1.5" height="40" fill="#58cc50"/>
<rect x="1206" y="404" width="1.5" height="40" fill="#58cc50"/>
<rect x="1266" y="404" width="1.5" height="40" fill="#58cc50"/>
<rect x="1324" y="404" width="1.5" height="40" fill="#58cc50"/>
<rect x="1358" y="404" width="1.5" height="40" fill="#58cc50"/>
<rect x="1364" y="404" width="1.5" height="40" fill="#58cc50"/>
<rect x="1424" y="404" width="1.5" height="40" fill="#58cc50"/>
<rect x="1434" y="404" width="1.5" height="40" fill="#58cc50"/>
<rect x="1450" y="404" width="1.5" height="40" fill="#58cc50"/>
<rect x="1504" y="404" width="1.5" height="40" fill="#58cc50"/>
<rect x="1516" y="404" width="1.5" height="40" fill="#58cc50"/>
<rect x="1524" y="404" width="1.5" height="40" fill="#58cc50"/>
<rect x="1590" y="404" width="1.5" height="40" fill="#58cc50"/>
<rect x="1598" y="404" width="1.5" height="40" fill="#58cc50"/>
<rect x="1612" y="404" width="1.5" height="40" fill="#58cc50"/>
<rect x="1620" y="404" width="1.5" height="40" fill="#58cc50"/>
<rect x="1680" y="404" width="1.5" height="40" fill="#58cc50"/>
<rect x="1696" y="404" width="1.5" height="40" fill="#58cc50"/>
<rect x="1760" y="404" width="1.5" height="40" fill="#58cc50"/>
<rect x="1770" y="404" width="1.5" height="40" fill="#58cc50"/>
<rect x="1780" y="404" width="1.5" height="40" fill="#58cc50"/>
<rect x="1788" y="404" width="1.5" height="40" fill="#58cc50"/>
<rect x="1848" y="404" width="1.5" height="40" fill="#58cc50"/>
<rect x="1864" y="404" width="1.5" height="40" fill="#58cc50"/>
<rect x="1872" y="404" width="1.5" height="40" fill="#58cc50"/>
<rect x="1886" y="404" width="1.5" height="40" fill="#58cc50"/>
<rect x="644" y="404" width="1.5" height="40" fill="#7b90d8"/>
<rect x="652.5" y="404" width="1.5" height="40" fill="#7b90d8"/>
<rect x="682" y="404" width="1.5" height="40" fill="#7b90d8"/>
<rect x="710" y="404" width="1.5" height="40" fill="#7b90d8"/>
<rect x="772" y="404" width="1.5" height="40" fill="#7b90d8"/>
<rect x="788" y="404" width="1.5" height="40" fill="#7b90d8"/>
<rect x="804" y="404" width="1.5" height="40" fill="#7b90d8"/>
<rect x="814" y="404" width="1.5" height="40" fill="#7b90d8"/>
<rect x="822" y="404" width="1.5" height="40" fill="#7b90d8"/>
<rect x="842" y="404" width="1.5" height="40" fill="#7b90d8"/>
<rect x="858" y="404" width="1.5" height="40" fill="#7b90d8"/>
<rect x="866" y="404" width="1.5" height="40" fill="#7b90d8"/>
<rect x="886" y="404" width="1.5" height="40" fill="#7b90d8"/>
<rect x="902" y="404" width="1.5" height="40" fill="#7b90d8"/>
<rect x="910" y="404" width="1.5" height="40" fill="#7b90d8"/>
<rect x="926" y="404" width="1.5" height="40" fill="#7b90d8"/>
<rect x="938" y="404" width="1.5" height="40" fill="#7b90d8"/>
<rect x="962" y="404" width="1.5" height="40" fill="#7b90d8"/>
<rect x="976" y="404" width="1.5" height="40" fill="#7b90d8"/>
<rect x="984" y="404" width="1.5" height="40" fill="#7b90d8"/>
<rect x="1004" y="404" width="1.5" height="40" fill="#7b90d8"/>
<rect x="1022" y="404" width="1.5" height="40" fill="#7b90d8"/>
<rect x="1030" y="404" width="1.5" height="40" fill="#7b90d8"/>
<rect x="1050" y="404" width="1.5" height="40" fill="#7b90d8"/>
<rect x="1068" y="404" width="1.5" height="40" fill="#7b90d8"/>
<rect x="1078" y="404" width="1.5" height="40" fill="#7b90d8"/>
<rect x="1094" y="404" width="1.5" height="40" fill="#7b90d8"/>
<rect x="1098" y="404" width="1.5" height="40" fill="#7b90d8"/>
<rect x="1130" y="404" width="1.5" height="40" fill="#7b90d8"/>
<rect x="1140" y="404" width="1.5" height="40" fill="#7b90d8"/>
<rect x="1160" y="404" width="1.5" height="40" fill="#7b90d8"/>
<rect x="1178" y="404" width="1.5" height="40" fill="#7b90d8"/>
<rect x="1188" y="404" width="1.5" height="40" fill="#7b90d8"/>
<rect x="1208" y="404" width="1.5" height="40" fill="#7b90d8"/>
<rect x="1236" y="404" width="1.5" height="40" fill="#7b90d8"/>
<rect x="1242" y="404" width="1.5" height="40" fill="#7b90d8"/>
<rect x="1246" y="404" width="1.5" height="40" fill="#7b90d8"/>
<rect x="1254" y="404" width="1.5" height="40" fill="#7b90d8"/>
<rect x="1264" y="404" width="1.5" height="40" fill="#7b90d8"/>
<rect x="1268" y="404" width="1.5" height="40" fill="#7b90d8"/>
<rect x="1294" y="404" width="1.5" height="40" fill="#7b90d8"/>
<rect x="1300" y="404" width="1.5" height="40" fill="#7b90d8"/>
<rect x="1304" y="404" width="1.5" height="40" fill="#7b90d8"/>
<rect x="1312" y="404" width="1.5" height="40" fill="#7b90d8"/>
<rect x="1322" y="404" width="1.5" height="40" fill="#7b90d8"/>
<rect x="1326" y="404" width="1.5" height="40" fill="#7b90d8"/>
<rect x="1328" y="404" width="1.5" height="40" fill="#7b90d8"/>
<rect x="1356" y="404" width="1.5" height="40" fill="#7b90d8"/>
<rect x="1366" y="404" width="1.5" height="40" fill="#7b90d8"/>
<rect x="1392" y="404" width="1.5" height="40" fill="#7b90d8"/>
<rect x="1422" y="404" width="1.5" height="40" fill="#7b90d8"/>
<rect x="1432" y="404" width="1.5" height="40" fill="#7b90d8"/>
<rect x="1442" y="404" width="1.5" height="40" fill="#7b90d8"/>
<rect x="1458" y="404" width="1.5" height="40" fill="#7b90d8"/>
<rect x="1502" y="404" width="1.5" height="40" fill="#7b90d8"/>
<rect x="1510" y="404" width="1.5" height="40" fill="#7b90d8"/>
<rect x="1514" y="404" width="1.5" height="40" fill="#7b90d8"/>
<rect x="1534" y="404" width="1.5" height="40" fill="#7b90d8"/>
<rect x="1540" y="404" width="1.5" height="40" fill="#7b90d8"/>
<rect x="1588" y="404" width="1.5" height="40" fill="#7b90d8"/>
<rect x="1594" y="404" width="1.5" height="40" fill="#7b90d8"/>
<rect x="1600" y="404" width="1.5" height="40" fill="#7b90d8"/>
<rect x="1624" y="404" width="1.5" height="40" fill="#7b90d8"/>
<rect x="1630" y="404" width="1.5" height="40" fill="#7b90d8"/>
<rect x="1670" y="404" width="1.5" height="40" fill="#7b90d8"/>
<rect x="1672" y="404" width="1.5" height="40" fill="#7b90d8"/>
<rect x="1676" y="404" width="1.5" height="40" fill="#7b90d8"/>
<rect x="1682" y="404" width="1.5" height="40" fill="#7b90d8"/>
<rect x="1686" y="404" width="1.5" height="40" fill="#7b90d8"/>
<rect x="1690" y="404" width="1.5" height="40" fill="#7b90d8"/>
<rect x="1694" y="404" width="1.5" height="40" fill="#7b90d8"/>
<rect x="1706" y="404" width="1.5" height="40" fill="#7b90d8"/>
<rect x="1714" y="404" width="1.5" height="40" fill="#7b90d8"/>
<rect x="1754" y="404" width="1.5" height="40" fill="#7b90d8"/>
<rect x="1758" y="404" width="1.5" height="40" fill="#7b90d8"/>
<rect x="1764" y="404" width="1.5" height="40" fill="#7b90d8"/>
<rect x="1766" y="404" width="1.5" height="40" fill="#7b90d8"/>
<rect x="1774" y="404" width="1.5" height="40" fill="#7b90d8"/>
<rect x="1800" y="404" width="1.5" height="40" fill="#7b90d8"/>
<rect x="1836" y="404" width="1.5" height="40" fill="#7b90d8"/>
<rect x="1842" y="404" width="1.5" height="40" fill="#7b90d8"/>
<rect x="1846" y="404" width="1.5" height="40" fill="#7b90d8"/>
<rect x="1852" y="404" width="1.5" height="40" fill="#7b90d8"/>
<rect x="1856" y="404" width="1.5" height="40" fill="#7b90d8"/>
<rect x="1862" y="404" width="1.5" height="40" fill="#7b90d8"/>
<rect x="1884" y="404" width="1.5" height="40" fill="#7b90d8"/>
<rect x="654.5" y="404.5" width="9" height="39" rx="3.5" fill="url(#ggr)" stroke="#2f8a2c" stroke-width="0.8"/>
<rect x="844.5" y="404.5" width="13.2" height="39" rx="3.5" fill="url(#ggr)" stroke="#2f8a2c" stroke-width="0.8"/>
<rect x="888.3" y="404.5" width="13.4" height="39" rx="3.5" fill="url(#ggr)" stroke="#2f8a2c" stroke-width="0.8"/>
<rect x="966.5" y="404.5" width="9" height="39" rx="3.5" fill="url(#ggr)" stroke="#2f8a2c" stroke-width="0.8"/>
<rect x="1006.5" y="404.5" width="15.2" height="39" rx="3.5" fill="url(#ggr)" stroke="#2f8a2c" stroke-width="0.8"/>
<rect x="1052.5" y="404.5" width="15.2" height="39" rx="3.5" fill="url(#ggr)" stroke="#2f8a2c" stroke-width="0.8"/>
<rect x="1100.3" y="404.5" width="29.1" height="39" rx="3.5" fill="url(#ggr)" stroke="#2f8a2c" stroke-width="0.8"/>
<rect x="1162.5" y="404.5" width="15" height="39" rx="3.5" fill="url(#ggr)" stroke="#2f8a2c" stroke-width="0.8"/>
<rect x="1210.6" y="404.5" width="24.9" height="39" rx="3.5" fill="url(#ggr)" stroke="#2f8a2c" stroke-width="0.8"/>
<rect x="1270.6" y="404.5" width="22.8" height="39" rx="3.5" fill="url(#ggr)" stroke="#2f8a2c" stroke-width="0.8"/>
<rect x="1330.6" y="404.5" width="24.9" height="39" rx="3.5" fill="url(#ggr)" stroke="#2f8a2c" stroke-width="0.8"/>
<rect x="1394.5" y="404.5" width="26.9" height="39" rx="3.5" fill="url(#ggr)" stroke="#2f8a2c" stroke-width="0.8"/>
<rect x="1460.3" y="404.5" width="41.1" height="39" rx="3.5" fill="url(#ggr)" stroke="#2f8a2c" stroke-width="0.8"/>
<rect x="1542.5" y="404.5" width="45" height="39" rx="3.5" fill="url(#ggr)" stroke="#2f8a2c" stroke-width="0.8"/>
<rect x="1632.3" y="404.5" width="37.1" height="39" rx="3.5" fill="url(#ggr)" stroke="#2f8a2c" stroke-width="0.8"/>
<rect x="1716.5" y="404.5" width="36.9" height="39" rx="3.5" fill="url(#ggr)" stroke="#2f8a2c" stroke-width="0.8"/>
<rect x="1802.3" y="404.5" width="33.2" height="39" rx="3.5" fill="url(#ggr)" stroke="#2f8a2c" stroke-width="0.8"/>
</g>
</g>
<g id="icons">
  <!-- tab close buttons -->
  <path d="M277.8,36.4L285.8,44.6M285.8,36.4L277.8,44.6" stroke="#173a57" stroke-width="1.3" fill="none"/>
  <path d="M565,37.6L573,45.8M573,37.6L565,45.8" stroke="#3c3c3c" stroke-width="1.2" fill="none"/>
  <!-- combo hamburger + arrow -->
  <path d="M26.2,70.4H34.6M27,73.4H36M26.2,76.3H34.6" stroke="#111" stroke-width="1.25" stroke-linecap="round" fill="none"/>
  <path d="M174.6,71.3H182.2L178.4,75.5Z" fill="#666"/>
  <!-- options icon -->
  <circle cx="208" cy="72.6" r="4.6" fill="none" stroke="#111" stroke-width="1"/>
  <circle cx="208" cy="72.6" r="2.3" fill="none" stroke="#111" stroke-width="0.9"/>
  <!-- ruler dropdown triangle + back arrow -->
  <path d="M203.8,100.1H210.3L207.05,103.9Z" fill="#000"/>
  <path d="M223.8,100.2L230.8,93.6V97.9H238.8V102.6H230.8V106.9Z" fill="#2a6090"/>
  <!-- keyboard -->
  <rect x="1548.7" y="68" width="14.6" height="9.4" rx="1.6" fill="none" stroke="#111" stroke-width="1.3"/>
  <path d="M1551,70.6H1561.2M1551,72.6H1561.2" stroke="#111" stroke-width="1" stroke-dasharray="1 1" fill="none"/>
  <path d="M1552.3,74.9H1559.8" stroke="#111" stroke-width="1.1" fill="none"/>
  <!-- zoom out -->
  <circle cx="1580.7" cy="71.5" r="5" fill="none" stroke="#111" stroke-width="1.3"/>
  <path d="M1577.8,71.5H1583.6" stroke="#111" stroke-width="1.3" fill="none"/>
  <path d="M1584.4,75.3L1588.8,79.7" stroke="#111" stroke-width="1.5" stroke-linecap="round" fill="none"/>
  <!-- slider -->
  <rect x="1602.5" y="67.5" width="81" height="4" rx="2" fill="#dadada" stroke="#bdbdbd" stroke-width="1"/>
  <rect x="1602.5" y="67.5" width="27" height="4" rx="2" fill="#3d9be0" stroke="#3182c2" stroke-width="1"/>
  <rect x="1625.5" y="63.6" width="12" height="12" rx="3" fill="url(#gh)" stroke="#b3b3b3" stroke-width="1"/>
  <path d="M1608.5,81.2V84.6M1631.5,81.2V83.8M1654.5,81.2V83.8M1677.5,81.2V84.6" stroke="#8a8a8a" stroke-width="1" fill="none"/>
  <!-- warning -->
  <path d="M1749.9,67.6L1756.3,78.1H1743.6Z" fill="none" stroke="#ff7a14" stroke-width="1.3" stroke-linejoin="round"/>
  <path d="M1749.9,70.6V74" stroke="#ff7a14" stroke-width="1.1" fill="none"/>
  <circle cx="1749.9" cy="75.9" r="0.7" fill="#ff7a14"/>
  <!-- tree expanders -->
  <g fill="#5f5f5f">
    <path d="M19.2,129H26.8L23,133Z"/>
    <path d="M19.2,278H26.8L23,282Z"/>
    <path d="M31,177.6L35,181.8L31,186Z"/>
    <path d="M31,227.6L35,231.8L31,236Z" fill="#3c4d60"/>
    <path d="M29.2,325.8H36.8L33,330Z"/>
    <path d="M29.2,517.8H36.8L33,522Z"/>
    <path d="M29.2,663.8H36.8L33,668Z"/>
    <path d="M29.2,809.8H36.8L33,814Z"/>
  </g>
  <!-- pin icon -->
  <path d="M197,226H200.4Q202,226 202,227.6V235.5" fill="none" stroke="#2a6090" stroke-width="1.9"/>
  <path d="M198.4,234.6H205.6L202,239.2Z" fill="#2a6090"/>
  <!-- scrollbar arrows -->
  <path d="M1891.3,98H1899L1895.15,94.1Z" fill="#555"/>
  <path d="M1891.3,940.2H1899L1895.15,944.2Z" fill="#555"/>
  <path d="M226.6,953.8V961.4L222.6,957.6Z" fill="#555"/>
  <path d="M1879,953.8V961.4L1883,957.6Z" fill="#555"/>
  <!-- status chat icon -->
  <path d="M1903.5,987.7H1914.3Q1915.3,987.7 1915.3,988.7V996.2Q1915.3,997.2 1914.3,997.2H1909.3L1907.2,999.4V997.2H1903.5Q1902.5,997.2 1902.5,996.2V988.7Q1902.5,987.7 1903.5,987.7Z" fill="none" stroke="#111" stroke-width="1.3" stroke-linejoin="round"/>
</g>
</svg>
<svg id="labels" width="1920" height="1007" viewBox="0 0 1920 1007" style="will-change:transform">
<text x="1111.1" y="190.3" class="tc" text-anchor="middle" fill="#111">...</text>
<text x="1475.85" y="190.3" class="tc" text-anchor="middle" fill="#111">...</text>
<text x="1559.85" y="190.3" class="tc" text-anchor="middle" fill="#111">...</text>
<text x="1645" y="190.3" class="tc" text-anchor="middle" fill="#111">...</text>
<text x="1729" y="190.3" class="tc" text-anchor="middle" fill="#111">...</text>
<text x="502" y="385.7" class="tl" text-anchor="middle" textLength="43.5" lengthAdjust="spacingAndGlyphs" fill="#2e2e2e">ioctl</text>
<text x="571" y="385.7" class="tl" text-anchor="middle" textLength="37" lengthAdjust="spacingAndGlyphs" fill="#2e2e2e">io...</text>
<text x="379" y="577.7" class="tl" text-anchor="middle" fill="#2e2e2e" textLength="37.3" lengthAdjust="spacingAndGlyphs">poll</text>
<text x="791" y="577.7" class="tl" text-anchor="middle" textLength="37.3" lengthAdjust="spacingAndGlyphs" fill="#2e2e2e">poll</text>
<text x="1463.5" y="577.7" class="tl" text-anchor="middle" fill="#2e2e2e" textLength="37.3" lengthAdjust="spacingAndGlyphs">poll</text>
<text x="1053" y="869.6" class="tl" text-anchor="middle" fill="#2e2e2e" textLength="256.5" lengthAdjust="spacingAndGlyphs">pthread_cond_timedwait</text>
<text x="575" y="431.8" class="tc" text-anchor="middle" textLength="48" lengthAdjust="spacing" fill="#141a2e">lau...</text>
<text x="1114.85" y="431.7" class="tc" text-anchor="middle" fill="#0d1a0d">...</text>
<text x="1223.05" y="431.7" class="tc" text-anchor="middle" fill="#0d1a0d">...</text>
<text x="1282" y="431.7" class="tc" text-anchor="middle" fill="#0d1a0d">...</text>
<text x="1343.05" y="431.7" class="tc" text-anchor="middle" fill="#0d1a0d">...</text>
<text x="1407.95" y="431.7" class="tc" text-anchor="middle" fill="#0d1a0d">...</text>
<text x="1480.85" y="431.7" class="tc" text-anchor="middle" fill="#0d1a0d">c...</text>
<text x="1565" y="431.7" class="tc" text-anchor="middle" fill="#0d1a0d">cu...</text>
<text x="1650.85" y="431.7" class="tc" text-anchor="middle" fill="#0d1a0d">c...</text>
<text x="1734.95" y="431.7" class="tc" text-anchor="middle" fill="#0d1a0d">c...</text>
<text x="1818.9" y="431.7" class="tc" text-anchor="middle" fill="#0d1a0d">c...</text>
</svg>
</body>
</html>
